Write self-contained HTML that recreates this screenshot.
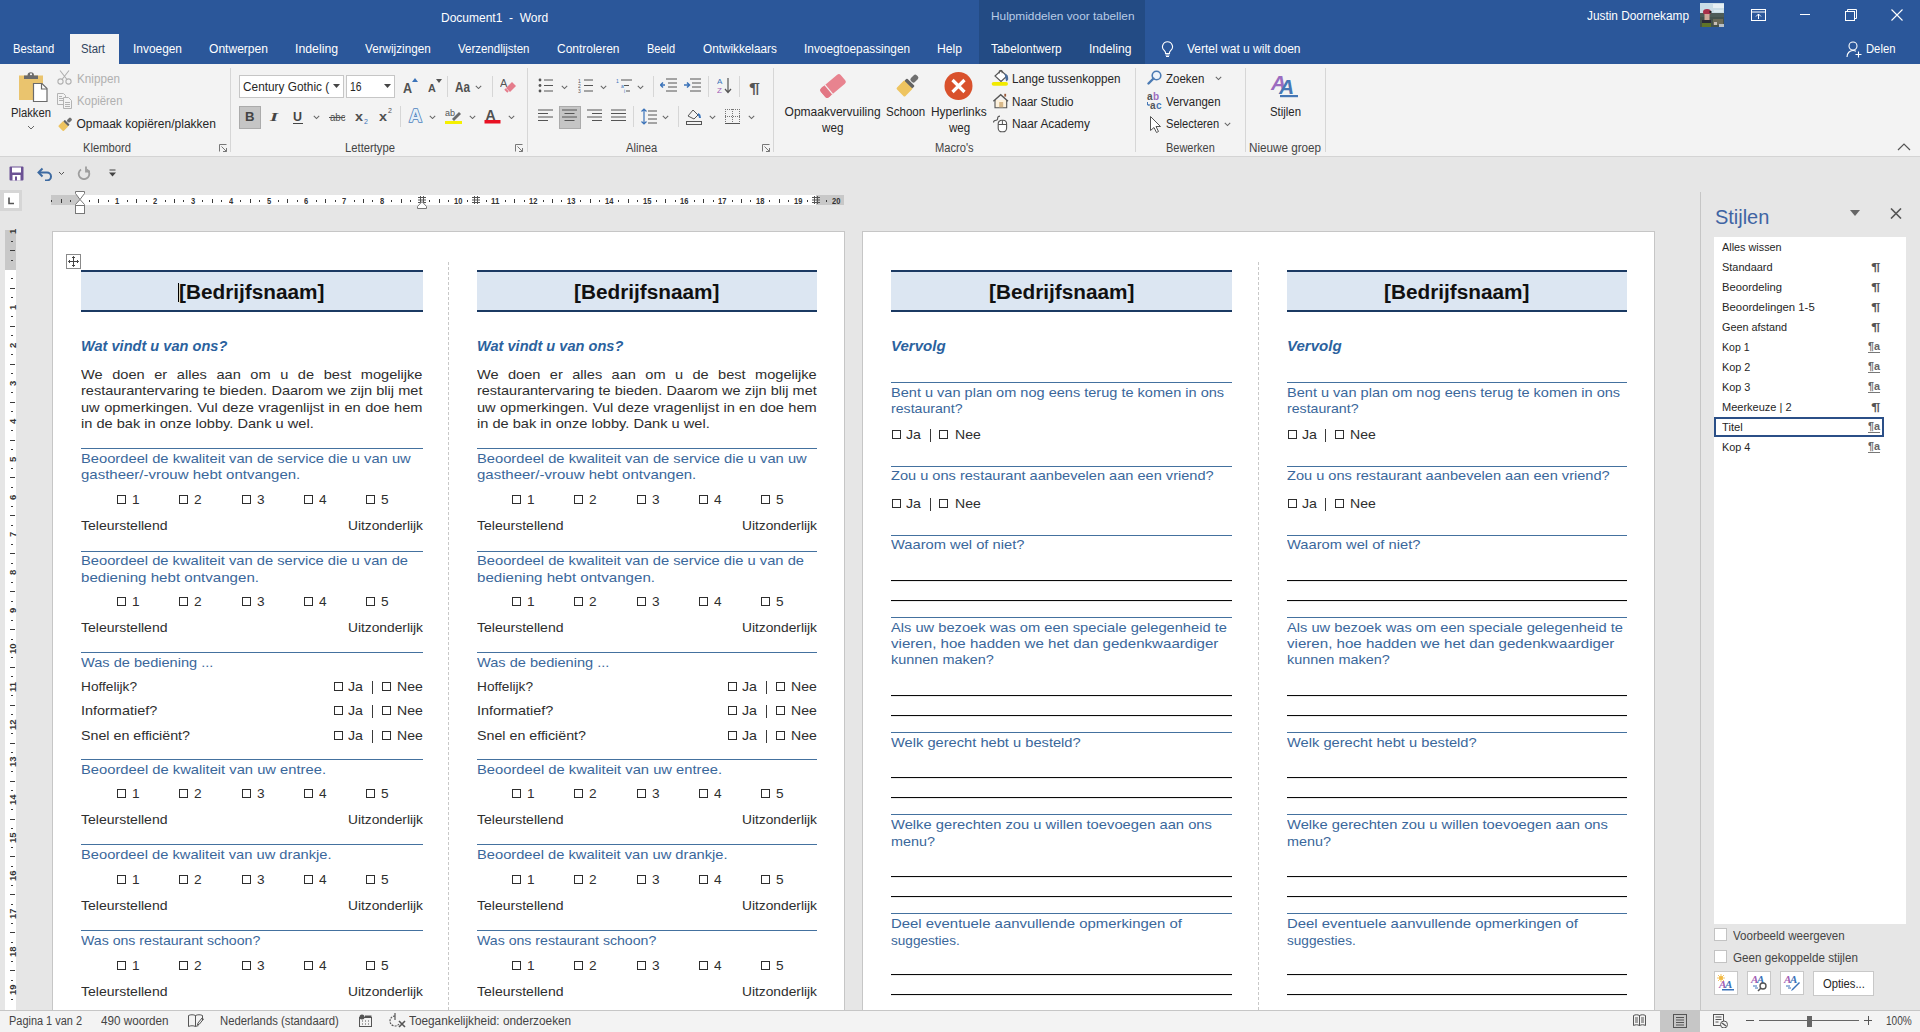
<!DOCTYPE html><html><head><meta charset="utf-8"><title>Document1 - Word</title><style>
html,body{margin:0;padding:0;width:1920px;height:1032px;overflow:hidden;background:#e6e6e6;font-family:'Liberation Sans',sans-serif;}
#root{position:relative;width:1920px;height:1032px;overflow:hidden;}
#root>div{position:absolute;}
.t{position:absolute;white-space:pre;transform-origin:0 0;}
</style></head><body><div id="root">
<div style="left:0px;top:0px;width:1920px;height:64px;background:#2b579a;"></div>
<div style="left:979px;top:0px;width:166px;height:64px;background:#234b84;"></div>
<div class="t" id="t2" style="left:441.00px;top:12.00px;font-size:12px;line-height:12px;color:#ffffff;">Document1  -  Word</div>
<div class="t" id="t3" style="left:991.00px;top:11.00px;font-size:11.5px;line-height:11.5px;color:#b9cbe6;transform:scaleX(1.0296);">Hulpmiddelen voor tabellen</div>
<div class="t" id="t4" style="left:1587.00px;top:10.00px;font-size:12px;line-height:12px;color:#ffffff;transform:scaleX(0.9865);">Justin Doornekamp</div>
<svg style="position:absolute;left:1700px;top:3px;" width="24" height="24" viewBox="0 0 24 24"><rect width="24" height="24" fill="#44524c"/><rect width="24" height="10" fill="#c9dde6"/><rect x="13" y="1" width="11" height="4" fill="#e6f0f4"/><rect x="14" y="7" width="9" height="2" fill="#d8e8ee"/><rect x="0" y="10" width="24" height="4" fill="#4d5c58"/><ellipse cx="7" cy="9" rx="4" ry="3" fill="#a8304a"/><rect x="9.5" y="8" width="2" height="2" fill="#222"/><rect x="4.5" y="11" width="5" height="6" fill="#cfa89a"/><rect x="2" y="17" width="9" height="4" fill="#2a2a38"/><rect x="2" y="20" width="9" height="4" fill="#5f7428"/><rect x="13" y="16" width="10" height="6" fill="#6b6a58"/><rect x="14" y="19" width="3" height="3" fill="#c8c0b8"/><rect x="19" y="21" width="5" height="3" fill="#b8c0c8"/></svg>
<svg style="position:absolute;left:1751px;top:9px;" width="15" height="12" viewBox="0 0 15 12"><rect x="0.5" y="0.5" width="14" height="11" fill="none" stroke="#fff"/><line x1="0.5" y1="3" x2="14.5" y2="3" stroke="#fff"/><path d="M7.5 10V5M5 7.5l2.5-2.5 2.5 2.5" fill="none" stroke="#fff"/></svg>
<div style="left:1800px;top:14px;width:10px;height:1px;background:#ffffff;"></div>
<svg style="position:absolute;left:1845px;top:9px;" width="12" height="12" viewBox="0 0 12 12"><rect x="0.5" y="2.5" width="9" height="9" fill="none" stroke="#fff"/><path d="M2.5 2.5V0.5h9v9h-2" fill="none" stroke="#fff"/></svg>
<svg style="position:absolute;left:1891px;top:9px;" width="12" height="12" viewBox="0 0 12 12"><path d="M0.5 0.5l11 11M11.5 0.5l-11 11" stroke="#fff" stroke-width="1.1"/></svg>
<div style="left:70px;top:34px;width:49px;height:30px;background:#f3f3f3;"></div>
<div class="t" id="t11" style="left:13.40px;top:43.00px;font-size:12.5px;line-height:12.5px;color:#ffffff;transform:scaleX(0.9003);">Bestand</div>
<div class="t" id="t12" style="left:81.00px;top:43.00px;font-size:12.5px;line-height:12.5px;color:#30435e;transform:scaleX(0.9089);">Start</div>
<div class="t" id="t13" style="left:133.00px;top:43.00px;font-size:12.5px;line-height:12.5px;color:#ffffff;transform:scaleX(0.9526);">Invoegen</div>
<div class="t" id="t14" style="left:209.00px;top:43.00px;font-size:12.5px;line-height:12.5px;color:#ffffff;transform:scaleX(0.9647);">Ontwerpen</div>
<div class="t" id="t15" style="left:294.80px;top:43.00px;font-size:12.5px;line-height:12.5px;color:#ffffff;transform:scaleX(0.9841);">Indeling</div>
<div class="t" id="t16" style="left:365.00px;top:43.00px;font-size:12.5px;line-height:12.5px;color:#ffffff;transform:scaleX(0.9361);">Verwijzingen</div>
<div class="t" id="t17" style="left:458.20px;top:43.00px;font-size:12.5px;line-height:12.5px;color:#ffffff;transform:scaleX(0.9187);">Verzendlijsten</div>
<div class="t" id="t18" style="left:557.30px;top:43.00px;font-size:12.5px;line-height:12.5px;color:#ffffff;transform:scaleX(0.9567);">Controleren</div>
<div class="t" id="t19" style="left:647.30px;top:43.00px;font-size:12.5px;line-height:12.5px;color:#ffffff;transform:scaleX(0.8817);">Beeld</div>
<div class="t" id="t20" style="left:703.30px;top:43.00px;font-size:12.5px;line-height:12.5px;color:#ffffff;transform:scaleX(0.9401);">Ontwikkelaars</div>
<div class="t" id="t21" style="left:803.90px;top:43.00px;font-size:12.5px;line-height:12.5px;color:#ffffff;transform:scaleX(0.9481);">Invoegtoepassingen</div>
<div class="t" id="t22" style="left:937.00px;top:43.00px;font-size:12.5px;line-height:12.5px;color:#ffffff;transform:scaleX(0.9721);">Help</div>
<div class="t" id="t23" style="left:991.00px;top:43.00px;font-size:12.5px;line-height:12.5px;color:#ffffff;transform:scaleX(0.9508);">Tabelontwerp</div>
<div class="t" id="t24" style="left:1089.20px;top:43.00px;font-size:12.5px;line-height:12.5px;color:#ffffff;transform:scaleX(0.9681);">Indeling</div>
<svg style="position:absolute;left:1161px;top:41px;" width="13" height="16" viewBox="0 0 13 16"><path d="M6.5 0.8a5 5 0 0 0-3 9c.6.5 1 1.2 1 2v.7h4v-.7c0-.8.4-1.5 1-2a5 5 0 0 0-3-9z" fill="none" stroke="#fff" stroke-width="1.1"/><path d="M4.5 14h4M5 15.5h3" stroke="#fff"/></svg>
<div class="t" id="t26" style="left:1187.00px;top:43.00px;font-size:12.5px;line-height:12.5px;color:#ffffff;transform:scaleX(0.9608);">Vertel wat u wilt doen</div>
<svg style="position:absolute;left:1846px;top:41px;" width="17" height="17" viewBox="0 0 17 17"><circle cx="7" cy="5" r="4" fill="none" stroke="#fff" stroke-width="1.1"/><path d="M1 16c0-4 2.7-6.5 6-6.5 1.2 0 2.2.3 3 .8" fill="none" stroke="#fff" stroke-width="1.1"/><path d="M12.5 10.5v6M9.5 13.5h6" stroke="#fff" stroke-width="1.1"/></svg>
<div class="t" id="t28" style="left:1866.00px;top:43.00px;font-size:12.5px;line-height:12.5px;color:#ffffff;transform:scaleX(0.8999);">Delen</div>
<div style="left:0px;top:64px;width:1920px;height:92px;background:#f3f3f3;"></div>
<div style="left:0px;top:156px;width:1920px;height:1px;background:#d4d4d4;"></div>
<div style="left:230px;top:68px;width:1px;height:84px;background:#d6d6d6;"></div>
<div style="left:527px;top:68px;width:1px;height:84px;background:#d6d6d6;"></div>
<div style="left:773px;top:68px;width:1px;height:84px;background:#d6d6d6;"></div>
<div style="left:1135px;top:68px;width:1px;height:84px;background:#d6d6d6;"></div>
<div style="left:1245px;top:68px;width:1px;height:84px;background:#d6d6d6;"></div>
<div style="left:1325px;top:68px;width:1px;height:84px;background:#d6d6d6;"></div>
<div class="t" id="t37" style="left:82.50px;top:142.00px;font-size:12px;line-height:12px;color:#444444;transform:scaleX(0.9365);">Klembord</div>
<div class="t" id="t38" style="left:345.30px;top:142.00px;font-size:12px;line-height:12px;color:#444444;transform:scaleX(0.9368);">Lettertype</div>
<div class="t" id="t39" style="left:626.20px;top:142.00px;font-size:12px;line-height:12px;color:#444444;transform:scaleX(0.9323);">Alinea</div>
<div class="t" id="t40" style="left:934.50px;top:142.00px;font-size:12px;line-height:12px;color:#444444;transform:scaleX(0.9270);">Macro's</div>
<div class="t" id="t41" style="left:1165.50px;top:142.00px;font-size:12px;line-height:12px;color:#444444;transform:scaleX(0.9143);">Bewerken</div>
<div class="t" id="t42" style="left:1249.30px;top:142.00px;font-size:12px;line-height:12px;color:#444444;transform:scaleX(0.9724);">Nieuwe groep</div>
<svg style="position:absolute;left:219px;top:144px;" width="8" height="8" viewBox="0 0 8 8"><path d="M0.5 7.5V0.5h7" fill="none" stroke="#777"/><path d="M2.5 2.5l5 5M4 7.5h3.5V4" fill="none" stroke="#777"/></svg>
<svg style="position:absolute;left:515px;top:144px;" width="8" height="8" viewBox="0 0 8 8"><path d="M0.5 7.5V0.5h7" fill="none" stroke="#777"/><path d="M2.5 2.5l5 5M4 7.5h3.5V4" fill="none" stroke="#777"/></svg>
<svg style="position:absolute;left:762px;top:144px;" width="8" height="8" viewBox="0 0 8 8"><path d="M0.5 7.5V0.5h7" fill="none" stroke="#777"/><path d="M2.5 2.5l5 5M4 7.5h3.5V4" fill="none" stroke="#777"/></svg>
<svg style="position:absolute;left:1897px;top:142px;" width="14" height="9" viewBox="0 0 14 9"><path d="M1 8l6-6 6 6" fill="none" stroke="#555" stroke-width="1.2"/></svg>
<svg style="position:absolute;left:17px;top:71px;" width="32" height="32" viewBox="0 0 32 32"><rect x="2" y="4.5" width="24" height="24.5" fill="#eac46e"/><path d="M7 8V4.5h3.5a3 3 0 0 1 6.5 0H21V8z" fill="#6b6b6b"/><circle cx="14" cy="3.3" r="1" fill="#fff"/><path d="M16.5 12.5h8.5l5 5v13h-13.5z" fill="#fff" stroke="#6b6b6b" stroke-width="1.2"/><path d="M24.5 12.5v5.5h5.5" fill="none" stroke="#6b6b6b" stroke-width="1.2"/></svg>
<div class="t" id="t48" style="left:10.60px;top:107.00px;font-size:12px;line-height:12px;color:#262626;transform:scaleX(0.9367);">Plakken</div>
<svg style="position:absolute;left:27px;top:125px;" width="8" height="5" viewBox="0 0 8 5"><path d="M1 1l3 3 3-3" fill="none" stroke="#666"/></svg>
<svg style="position:absolute;left:57px;top:70px;" width="16" height="15" viewBox="0 0 16 15"><circle cx="3.5" cy="11.5" r="2.6" fill="none" stroke="#b0b0b0" stroke-width="1.1"/><circle cx="11.5" cy="11.5" r="2.6" fill="none" stroke="#b0b0b0" stroke-width="1.1"/><path d="M5 9.5L12 0.5M10 9.5L3 0.5" stroke="#b0b0b0" stroke-width="1.1"/></svg>
<div class="t" id="t51" style="left:76.50px;top:73.00px;font-size:12px;line-height:12px;color:#b0b0b0;transform:scaleX(0.9740);">Knippen</div>
<svg style="position:absolute;left:57px;top:93px;" width="16" height="16" viewBox="0 0 16 16"><path d="M0.5 0.5h6l2 2v9h-8z" fill="#f3f3f3" stroke="#b3b3b3"/><path d="M2 3.5h3M2 5.5h4M2 7.5h4" stroke="#b3b3b3"/><path d="M6.5 4.5h5l3 3v8h-8z" fill="#f3f3f3" stroke="#b3b3b3"/><path d="M8 9.5h5M8 11.5h5M8 13.5h5" stroke="#b3b3b3"/></svg>
<div class="t" id="t53" style="left:76.50px;top:95.00px;font-size:12px;line-height:12px;color:#b0b0b0;transform:scaleX(0.9470);">Kopiëren</div>
<svg style="position:absolute;left:56px;top:116px;" width="18" height="17" viewBox="0 0 18 17"><g transform="translate(9.5 8) rotate(-45) scale(0.62)"><rect x="-11" y="-6" width="12" height="12" rx="1.5" fill="#eec460"/><rect x="0.5" y="-5.5" width="3.5" height="11" rx="1" fill="#636363"/><rect x="5" y="-2.8" width="8" height="5.6" rx="2" fill="#707070"/></g></svg>
<div class="t" id="t55" style="left:76.50px;top:118.00px;font-size:12px;line-height:12px;color:#262626;">Opmaak kopiëren/plakken</div>
<div style="left:239px;top:75px;width:105px;height:23px;background:#ffffff;box-sizing:border-box;border:1px solid #c6c6c6;"></div>
<div class="t" id="t57" style="left:242.50px;top:81.00px;font-size:12.5px;line-height:12.5px;color:#262626;transform:scaleX(0.9476);">Century Gothic (</div>
<svg style="position:absolute;left:333px;top:84px;" width="7" height="4" viewBox="0 0 7 4"><path d="M0 0h7L3.5 4z" fill="#444"/></svg>
<div style="left:346px;top:75px;width:49px;height:23px;background:#ffffff;box-sizing:border-box;border:1px solid #c6c6c6;"></div>
<div class="t" id="t60" style="left:350.00px;top:81.00px;font-size:12.5px;line-height:12.5px;color:#262626;transform:scaleX(0.8270);">16</div>
<svg style="position:absolute;left:384px;top:84px;" width="7" height="4" viewBox="0 0 7 4"><path d="M0 0h7L3.5 4z" fill="#444"/></svg>
<div class="t" id="t62" style="left:403.40px;top:81.00px;font-size:14px;line-height:14px;color:#505050;font-weight:bold;transform:scaleX(0.8988);">A</div>
<svg style="position:absolute;left:412px;top:78px;" width="6" height="4" viewBox="0 0 6 4"><path d="M0 4l3-4 3 4z" fill="#3b73b9"/></svg>
<div class="t" id="t64" style="left:427.70px;top:83.00px;font-size:11.5px;line-height:11.5px;color:#505050;font-weight:bold;transform:scaleX(0.9383);">A</div>
<svg style="position:absolute;left:436px;top:79px;" width="6" height="4" viewBox="0 0 6 4"><path d="M0 0l3 4 3-4z" fill="#555"/></svg>
<div style="left:447px;top:76px;width:1px;height:21px;background:#d6d6d6;"></div>
<div class="t" id="t67" style="left:455.00px;top:80.00px;font-size:14px;line-height:14px;color:#505050;font-weight:bold;transform:scaleX(0.8377);">Aa</div>
<svg style="position:absolute;left:475px;top:85px;" width="7" height="4" viewBox="0 0 7 4"><path d="M0.8 0.8l2.7 2.7 2.7-2.7" fill="none" stroke="#666" stroke-width="1.05"/></svg>
<div style="left:492px;top:76px;width:1px;height:21px;background:#d6d6d6;"></div>
<svg style="position:absolute;left:500px;top:77px;" width="17" height="16" viewBox="0 0 17 16"><text x="0" y="10" font-family="Liberation Sans" font-size="11" fill="#555">A</text><path d="M6 11l6-6 4 4-6 6z" fill="#e57c8b"/><path d="M5 12l3 3" stroke="#e57c8b" stroke-width="2"/></svg>
<div style="left:239px;top:106px;width:22px;height:23px;background:#c5c5c5;box-sizing:border-box;border:1px solid #ababab;"></div>
<div class="t" id="t72" style="left:245.00px;top:110.00px;font-size:13px;line-height:13px;color:#444444;font-weight:bold;transform:scaleX(1.0116);">B</div>
<div class="t" id="t73" style="left:269.50px;top:110.00px;font-size:13.5px;line-height:13.5px;color:#444444;font-family:'Liberation Serif';font-weight:bold;font-style:italic;transform:scaleX(1.5193);">I</div>
<div class="t" id="t74" style="left:293.00px;top:111.00px;font-size:12.5px;line-height:12.5px;color:#444444;font-weight:bold;transform:scaleX(0.9965);">U</div>
<div style="left:293px;top:123px;width:10px;height:1px;background:#444;"></div>
<svg style="position:absolute;left:313px;top:115px;" width="7" height="5" viewBox="0 0 7 5"><path d="M0.8 0.8l2.7 2.7 2.7-2.7" fill="none" stroke="#666" stroke-width="1.05"/></svg>
<div class="t" id="t77" style="left:329.50px;top:112.00px;font-size:11.5px;line-height:11.5px;color:#505050;transform:scaleX(0.8357);">abc</div>
<div style="left:329px;top:117px;width:16px;height:1px;background:#505050;"></div>
<div class="t" id="t79" style="left:355.00px;top:110.00px;font-size:13px;line-height:13px;color:#505050;font-weight:bold;transform:scaleX(1.1058);">x</div>
<div class="t" id="t80" style="left:364.00px;top:118.00px;font-size:7px;line-height:7px;color:#3b73b9;">2</div>
<div class="t" id="t81" style="left:379.00px;top:110.00px;font-size:13px;line-height:13px;color:#505050;font-weight:bold;transform:scaleX(1.1058);">x</div>
<div class="t" id="t82" style="left:388.00px;top:107.00px;font-size:7px;line-height:7px;color:#505050;">2</div>
<div style="left:400px;top:106px;width:1px;height:21px;background:#d6d6d6;"></div>
<svg style="position:absolute;left:408px;top:106px;" width="16" height="18" viewBox="0 0 16 18"><text x="1" y="16" font-family="Liberation Sans" font-size="18" font-weight="bold" fill="#e4eef8" stroke="#4f83bd" stroke-width="1.6" paint-order="stroke">A</text></svg>
<svg style="position:absolute;left:429px;top:115px;" width="7" height="4" viewBox="0 0 7 4"><path d="M0.8 0.8l2.7 2.7 2.7-2.7" fill="none" stroke="#666" stroke-width="1.05"/></svg>
<svg style="position:absolute;left:445px;top:107px;" width="18" height="18" viewBox="0 0 18 18"><text x="0" y="9" font-family="Liberation Sans" font-size="9" fill="#555">ab</text><path d="M7 12l7-7 2 2-7 7z" fill="#6a6a6a"/><rect x="0" y="14" width="17" height="3" fill="#f5f000"/></svg>
<svg style="position:absolute;left:469px;top:115px;" width="7" height="4" viewBox="0 0 7 4"><path d="M0.8 0.8l2.7 2.7 2.7-2.7" fill="none" stroke="#666" stroke-width="1.05"/></svg>
<svg style="position:absolute;left:484px;top:107px;" width="18" height="18" viewBox="0 0 18 18"><text x="1.5" y="12.5" font-family="Liberation Sans" font-size="14" font-weight="bold" fill="#505050">A</text><rect x="0.5" y="13" width="16" height="3.5" fill="#e81123"/></svg>
<svg style="position:absolute;left:508px;top:115px;" width="7" height="4" viewBox="0 0 7 4"><path d="M0.8 0.8l2.7 2.7 2.7-2.7" fill="none" stroke="#666" stroke-width="1.05"/></svg>
<svg style="position:absolute;left:538px;top:78px;" width="15" height="15" viewBox="0 0 15 15"><circle cx="2" cy="2" r="1.4" fill="#555"/><circle cx="2" cy="7.5" r="1.4" fill="#555"/><circle cx="2" cy="13" r="1.4" fill="#555"/><path d="M6 2h9M6 7.5h9M6 13h9" stroke="#555"/></svg>
<svg style="position:absolute;left:561px;top:85px;" width="7" height="5" viewBox="0 0 7 5"><path d="M0.8 0.8l2.7 2.7 2.7-2.7" fill="none" stroke="#666" stroke-width="1.05"/></svg>
<svg style="position:absolute;left:578px;top:78px;" width="15" height="15" viewBox="0 0 15 15"><text x="0" y="5" font-size="5" font-family="Liberation Sans" fill="#555">1</text><text x="0" y="10" font-size="5" font-family="Liberation Sans" fill="#555">2</text><text x="0" y="15" font-size="5" font-family="Liberation Sans" fill="#555">3</text><path d="M6 2h9M6 7.5h9M6 13h9" stroke="#555"/></svg>
<svg style="position:absolute;left:600px;top:85px;" width="7" height="5" viewBox="0 0 7 5"><path d="M0.8 0.8l2.7 2.7 2.7-2.7" fill="none" stroke="#666" stroke-width="1.05"/></svg>
<svg style="position:absolute;left:616px;top:78px;" width="17" height="15" viewBox="0 0 17 15"><text x="0" y="5" font-size="5" font-family="Liberation Sans" fill="#3b73b9">1</text><path d="M5 2h11M8 7.5h5M10 13h4" stroke="#555"/><text x="5" y="10" font-size="5" font-family="Liberation Sans" fill="#3b73b9">a</text><text x="8" y="15" font-size="5" font-family="Liberation Sans" fill="#3b73b9">i</text></svg>
<svg style="position:absolute;left:637px;top:85px;" width="7" height="5" viewBox="0 0 7 5"><path d="M0.8 0.8l2.7 2.7 2.7-2.7" fill="none" stroke="#666" stroke-width="1.05"/></svg>
<div style="left:653px;top:76px;width:1px;height:21px;background:#d6d6d6;"></div>
<svg style="position:absolute;left:660px;top:78px;" width="17" height="14" viewBox="0 0 17 14"><path d="M6 1h11M8 5h9M8 9h9M6 13h11" stroke="#555"/><path d="M5 7H0.5M3 4.5L0.5 7 3 9.5" fill="none" stroke="#3b73b9" stroke-width="1.5"/></svg>
<svg style="position:absolute;left:684px;top:78px;" width="17" height="14" viewBox="0 0 17 14"><path d="M6 1h11M8 5h9M8 9h9M6 13h11" stroke="#555"/><path d="M0 7h5M3 4.5L5.5 7 3 9.5" fill="none" stroke="#3b73b9" stroke-width="1.5"/></svg>
<div style="left:708px;top:76px;width:1px;height:21px;background:#d6d6d6;"></div>
<svg style="position:absolute;left:717px;top:77px;" width="15" height="17" viewBox="0 0 15 17"><text x="0" y="7" font-size="8" font-family="Liberation Sans" fill="#3b73b9">A</text><text x="0" y="16" font-size="8" font-family="Liberation Sans" fill="#a35fb5">Z</text><path d="M11 1v14M8 12l3 3.5 3-3.5" fill="none" stroke="#555" stroke-width="1.2"/></svg>
<div style="left:739px;top:76px;width:1px;height:21px;background:#d6d6d6;"></div>
<div class="t" id="t102" style="left:749.00px;top:80.00px;font-size:15px;line-height:15px;color:#555555;font-weight:bold;transform:scaleX(1.3184);">¶</div>
<svg style="position:absolute;left:538px;top:109px;" width="16" height="16" viewBox="0 0 16 16"><path d="M0 1.0h15" stroke="#555"/><path d="M0 4.5h10" stroke="#555"/><path d="M0 8.0h15" stroke="#555"/><path d="M0 11.5h10" stroke="#555"/></svg>
<div style="left:559px;top:106px;width:22px;height:23px;background:#c5c5c5;box-sizing:border-box;border:1px solid #ababab;"></div>
<svg style="position:absolute;left:562px;top:109px;" width="16" height="16" viewBox="0 0 16 16"><path d="M0 1.0h15" stroke="#555"/><path d="M2.5 4.5h10" stroke="#555"/><path d="M0 8.0h15" stroke="#555"/><path d="M2.5 11.5h10" stroke="#555"/></svg>
<svg style="position:absolute;left:587px;top:109px;" width="16" height="16" viewBox="0 0 16 16"><path d="M0 1.0h15" stroke="#555"/><path d="M5 4.5h10" stroke="#555"/><path d="M0 8.0h15" stroke="#555"/><path d="M5 11.5h10" stroke="#555"/></svg>
<svg style="position:absolute;left:611px;top:109px;" width="16" height="16" viewBox="0 0 16 16"><path d="M0 1.0h15" stroke="#555"/><path d="M0 4.5h15" stroke="#555"/><path d="M0 8.0h15" stroke="#555"/><path d="M0 11.5h15" stroke="#555"/></svg>
<div style="left:633px;top:106px;width:1px;height:21px;background:#d6d6d6;"></div>
<svg style="position:absolute;left:641px;top:108px;" width="17" height="17" viewBox="0 0 17 17"><path d="M3 1v15M0.5 3.5L3 1l2.5 2.5M0.5 13.5L3 16l2.5-2.5" fill="none" stroke="#3b73b9" stroke-width="1.2"/><path d="M7 3h9M7 7h9M7 11h9M7 15h9" stroke="#555"/></svg>
<svg style="position:absolute;left:662px;top:115px;" width="7" height="5" viewBox="0 0 7 5"><path d="M0.8 0.8l2.7 2.7 2.7-2.7" fill="none" stroke="#666" stroke-width="1.05"/></svg>
<div style="left:678px;top:106px;width:1px;height:21px;background:#d6d6d6;"></div>
<svg style="position:absolute;left:686px;top:108px;" width="17" height="17" viewBox="0 0 17 17"><path d="M2 8l5-6 5 5-4 4z" fill="none" stroke="#555"/><path d="M12 6c2 1 2 3 2 4" stroke="#3b73b9" stroke-width="2" fill="none"/><rect x="0.5" y="13.5" width="15" height="3" fill="none" stroke="#555"/></svg>
<svg style="position:absolute;left:709px;top:115px;" width="7" height="5" viewBox="0 0 7 5"><path d="M0.8 0.8l2.7 2.7 2.7-2.7" fill="none" stroke="#666" stroke-width="1.05"/></svg>
<svg style="position:absolute;left:725px;top:109px;" width="15" height="15" viewBox="0 0 15 15"><path d="M0 0.5h15M0 7.5h15M0.5 0v14M7.5 0v14M14.5 0v14" stroke="#777" stroke-dasharray="1 1"/><path d="M0 14.5h15" stroke="#555"/></svg>
<svg style="position:absolute;left:748px;top:115px;" width="7" height="5" viewBox="0 0 7 5"><path d="M0.8 0.8l2.7 2.7 2.7-2.7" fill="none" stroke="#666" stroke-width="1.05"/></svg>
<svg style="position:absolute;left:818px;top:71px;" width="30" height="30" viewBox="0 0 30 30"><g transform="rotate(-40 15 15)"><rect x="2" y="9" width="26" height="12" rx="2.5" fill="#e8838f"/><rect x="2" y="9" width="7" height="12" rx="2.5" fill="#e27784"/><line x1="9.5" y1="9" x2="9.5" y2="21" stroke="#f3f3f3" stroke-width="1.2"/></g></svg>
<div class="t" id="t117" style="left:784.60px;top:106.00px;font-size:12px;line-height:12px;color:#262626;">Opmaakvervuiling</div>
<div class="t" id="t118" style="left:822.00px;top:122.00px;font-size:12px;line-height:12px;color:#262626;transform:scaleX(0.9720);">weg</div>
<svg style="position:absolute;left:892px;top:72px;" width="30" height="28" viewBox="0 0 30 28"><g transform="translate(16 13) rotate(-45)"><rect x="-11" y="-6" width="12" height="12" rx="1.5" fill="#eec460"/><rect x="0.5" y="-5.5" width="3.5" height="11" rx="1" fill="#636363"/><rect x="5" y="-2.8" width="8" height="5.6" rx="2" fill="#707070"/></g></svg>
<div class="t" id="t120" style="left:886.20px;top:106.00px;font-size:12px;line-height:12px;color:#262626;transform:scaleX(0.9631);">Schoon</div>
<svg style="position:absolute;left:944px;top:72px;" width="30" height="30" viewBox="0 0 30 30"><circle cx="14.5" cy="14" r="14" fill="#d9512c"/><path d="M8.5 8l12 12M20.5 8l-12 12" stroke="#fff" stroke-width="3.2"/></svg>
<div class="t" id="t122" style="left:931.10px;top:106.00px;font-size:12px;line-height:12px;color:#262626;transform:scaleX(0.9926);">Hyperlinks</div>
<div class="t" id="t123" style="left:948.50px;top:122.00px;font-size:12px;line-height:12px;color:#262626;transform:scaleX(0.9630);">weg</div>
<svg style="position:absolute;left:990px;top:68px;" width="20" height="20" viewBox="0 0 20 20"><path d="M5 8L11 2.5 17 8 11 13.5z" fill="#fff" stroke="#555" stroke-width="1.1"/><path d="M9.3 5.5V2.7h2.8v2.5" fill="none" stroke="#555"/><path d="M14.5 5.5c2.5.5 4 2.5 3.6 6.5l-2 1.5z" fill="#4a6d9c"/><rect x="1.7" y="13.9" width="16.3" height="3.8" rx="1.9" fill="#f2ea00"/></svg>
<div class="t" id="t125" style="left:1012.30px;top:73.00px;font-size:12px;line-height:12px;color:#262626;transform:scaleX(0.9736);">Lange tussenkoppen</div>
<svg style="position:absolute;left:992px;top:92px;" width="17" height="17" viewBox="0 0 17 17"><path d="M3 8v7.8h11.7V8" fill="#fdf1dc" stroke="#555" stroke-width="1.1"/><path d="M1.4 9.3L8.7 2.8 16 9.3" fill="none" stroke="#555" stroke-width="1.4"/><rect x="7.2" y="10" width="4" height="5.3" fill="#d8b888"/><rect x="12.3" y="1.8" width="1.8" height="2.8" fill="#9a5a3a"/></svg>
<div class="t" id="t127" style="left:1012.30px;top:96.00px;font-size:12px;line-height:12px;color:#262626;transform:scaleX(0.9704);">Naar Studio</div>
<svg style="position:absolute;left:992px;top:115px;" width="17" height="18" viewBox="0 0 17 18"><path d="M1.5 7.5c0-2 1.5-2.2 2.7-2.2 1.2 0 1.5-1 1.5-2.2 0-1.5 1.2-2 2.3-2" fill="none" stroke="#555" stroke-width="1.1"/><rect x="6.2" y="5.2" width="8.4" height="11.6" rx="3.6" fill="#fff" stroke="#555" stroke-width="1.1"/><path d="M6.2 9.5h8.4M10.4 5.2v4.3" stroke="#555" stroke-width="1"/></svg>
<div class="t" id="t129" style="left:1012.30px;top:118.00px;font-size:12px;line-height:12px;color:#262626;transform:scaleX(0.9898);">Naar Academy</div>
<svg style="position:absolute;left:1147px;top:70px;" width="15" height="15" viewBox="0 0 15 15"><circle cx="9.5" cy="5.5" r="4.3" fill="#eef4fb" stroke="#4a7ab3" stroke-width="1.6"/><path d="M6.5 8.5L1.5 13.5" stroke="#4a7ab3" stroke-width="2.4" stroke-linecap="round"/></svg>
<div class="t" id="t131" style="left:1166.00px;top:73.00px;font-size:12px;line-height:12px;color:#262626;transform:scaleX(0.9568);">Zoeken</div>
<svg style="position:absolute;left:1215px;top:76px;" width="7" height="5" viewBox="0 0 7 5"><path d="M0.8 0.8l2.7 2.7 2.7-2.7" fill="none" stroke="#666" stroke-width="1.05"/></svg>
<svg style="position:absolute;left:1146px;top:92px;" width="20" height="18" viewBox="0 0 20 18"><text x="1" y="8" font-size="10" font-weight="bold" font-family="Liberation Sans" fill="#555">a</text><text x="7" y="8" font-size="10" font-weight="bold" font-family="Liberation Sans" fill="#9b6cc0">b</text><text x="4" y="17" font-size="10" font-weight="bold" font-family="Liberation Sans" fill="#555">a</text><text x="10" y="17" font-size="10" font-weight="bold" font-family="Liberation Sans" fill="#4577b5">c</text><path d="M1.5 10v3h2M2.5 12l1 1-1 1" fill="none" stroke="#4577b5" stroke-width="1"/></svg>
<div class="t" id="t134" style="left:1166.00px;top:96.00px;font-size:12px;line-height:12px;color:#262626;transform:scaleX(0.9496);">Vervangen</div>
<svg style="position:absolute;left:1150px;top:116px;" width="11" height="17" viewBox="0 0 11 17"><path d="M0.5 0.5v14l3.5-3 2.5 5 2-1-2.5-5h4.5z" fill="#fff" stroke="#555"/></svg>
<div class="t" id="t136" style="left:1166.00px;top:118.00px;font-size:12px;line-height:12px;color:#262626;transform:scaleX(0.9272);">Selecteren</div>
<svg style="position:absolute;left:1224px;top:122px;" width="7" height="5" viewBox="0 0 7 5"><path d="M0.8 0.8l2.7 2.7 2.7-2.7" fill="none" stroke="#666" stroke-width="1.05"/></svg>
<svg style="position:absolute;left:1270px;top:72px;" width="30" height="27" viewBox="0 0 30 27"><text x="1" y="18" font-family="Liberation Sans" font-style="italic" font-weight="bold" font-size="21" fill="#9b6cc0">A</text><text x="9" y="22" font-family="Liberation Sans" font-style="italic" font-weight="bold" font-size="21" fill="#4577b5">A</text><rect x="10" y="23" width="18" height="2.2" fill="#4577b5"/></svg>
<div class="t" id="t139" style="left:1270.30px;top:106.00px;font-size:12px;line-height:12px;color:#262626;transform:scaleX(0.9484);">Stijlen</div>
<svg style="position:absolute;left:9px;top:166px;" width="15" height="15" viewBox="0 0 15 15"><rect x="0.5" y="0.5" width="14" height="14" rx="1" fill="#6b5194"/><rect x="3" y="1.5" width="9" height="5" fill="#fff"/><rect x="3.5" y="9" width="8" height="5.5" fill="#fff"/><rect x="6" y="10.5" width="2" height="4" fill="#6b5194"/></svg>
<svg style="position:absolute;left:37px;top:166px;" width="16" height="15" viewBox="0 0 16 15"><path d="M2 6.5h8a4 4 0 0 1 0 8H8" fill="none" stroke="#3d6aa1" stroke-width="2"/><path d="M5.5 2.5L1.5 6.5l4 4" fill="none" stroke="#3d6aa1" stroke-width="2"/></svg>
<svg style="position:absolute;left:58px;top:171px;" width="7" height="5" viewBox="0 0 7 5"><path d="M1 1l2.5 2.5 2.5-2.5" fill="none" stroke="#555"/></svg>
<svg style="position:absolute;left:77px;top:166px;" width="14" height="14" viewBox="0 0 14 14"><path d="M4 3.5a5.3 5.3 0 1 0 6 0" fill="none" stroke="#9e9e9e" stroke-width="1.8"/><path d="M9 0.5v5h4" fill="none" stroke="#9e9e9e" stroke-width="1.8"/></svg>
<svg style="position:absolute;left:109px;top:169px;" width="7" height="8" viewBox="0 0 7 8"><path d="M0.5 1h6" stroke="#444"/><path d="M0 3.5h7L3.5 7.5z" fill="#444"/></svg>
<div style="left:0px;top:190px;width:22px;height:21px;background:#d6d6d6;"></div>
<div style="left:4px;top:193px;width:15px;height:15px;background:#ffffff;"></div>
<svg style="position:absolute;left:8px;top:197px;" width="7" height="8" viewBox="0 0 7 8"><path d="M1 0.5v6h5" fill="none" stroke="#555" stroke-width="1.6"/></svg>
<div style="left:51px;top:195px;width:793px;height:10px;background:#ffffff;"></div>
<div style="left:51px;top:195px;width:29px;height:10px;background:#c8c8c8;"></div>
<div style="left:816px;top:195px;width:28px;height:10px;background:#c8c8c8;"></div>
<div style="left:51px;top:200px;width:1px;height:2px;background:#3c3c3c;"></div>
<div style="left:61px;top:199px;width:1px;height:4px;background:#3c3c3c;"></div>
<div style="left:70px;top:200px;width:1px;height:2px;background:#3c3c3c;"></div>
<div style="left:89px;top:200px;width:1px;height:2px;background:#3c3c3c;"></div>
<div style="left:98px;top:199px;width:1px;height:4px;background:#3c3c3c;"></div>
<div style="left:108px;top:200px;width:1px;height:2px;background:#3c3c3c;"></div>
<div class="t" id="t157" style="left:115.40px;top:196.00px;font-size:9.5px;line-height:9.5px;color:#333333;font-weight:bold;transform:scaleX(0.7929);">1</div>
<div style="left:127px;top:200px;width:1px;height:2px;background:#3c3c3c;"></div>
<div style="left:136px;top:199px;width:1px;height:4px;background:#3c3c3c;"></div>
<div style="left:146px;top:200px;width:1px;height:2px;background:#3c3c3c;"></div>
<div class="t" id="t161" style="left:153.20px;top:196.00px;font-size:9.5px;line-height:9.5px;color:#333333;font-weight:bold;transform:scaleX(0.7929);">2</div>
<div style="left:165px;top:200px;width:1px;height:2px;background:#3c3c3c;"></div>
<div style="left:174px;top:199px;width:1px;height:4px;background:#3c3c3c;"></div>
<div style="left:183px;top:200px;width:1px;height:2px;background:#3c3c3c;"></div>
<div class="t" id="t165" style="left:191.00px;top:196.00px;font-size:9.5px;line-height:9.5px;color:#333333;font-weight:bold;transform:scaleX(0.7929);">3</div>
<div style="left:202px;top:200px;width:1px;height:2px;background:#3c3c3c;"></div>
<div style="left:212px;top:199px;width:1px;height:4px;background:#3c3c3c;"></div>
<div style="left:221px;top:200px;width:1px;height:2px;background:#3c3c3c;"></div>
<div class="t" id="t169" style="left:228.80px;top:196.00px;font-size:9.5px;line-height:9.5px;color:#333333;font-weight:bold;transform:scaleX(0.7929);">4</div>
<div style="left:240px;top:200px;width:1px;height:2px;background:#3c3c3c;"></div>
<div style="left:250px;top:199px;width:1px;height:4px;background:#3c3c3c;"></div>
<div style="left:259px;top:200px;width:1px;height:2px;background:#3c3c3c;"></div>
<div class="t" id="t173" style="left:266.60px;top:196.00px;font-size:9.5px;line-height:9.5px;color:#333333;font-weight:bold;transform:scaleX(0.7929);">5</div>
<div style="left:278px;top:200px;width:1px;height:2px;background:#3c3c3c;"></div>
<div style="left:287px;top:199px;width:1px;height:4px;background:#3c3c3c;"></div>
<div style="left:297px;top:200px;width:1px;height:2px;background:#3c3c3c;"></div>
<div class="t" id="t177" style="left:304.40px;top:196.00px;font-size:9.5px;line-height:9.5px;color:#333333;font-weight:bold;transform:scaleX(0.7929);">6</div>
<div style="left:316px;top:200px;width:1px;height:2px;background:#3c3c3c;"></div>
<div style="left:325px;top:199px;width:1px;height:4px;background:#3c3c3c;"></div>
<div style="left:335px;top:200px;width:1px;height:2px;background:#3c3c3c;"></div>
<div class="t" id="t181" style="left:342.20px;top:196.00px;font-size:9.5px;line-height:9.5px;color:#333333;font-weight:bold;transform:scaleX(0.7929);">7</div>
<div style="left:354px;top:200px;width:1px;height:2px;background:#3c3c3c;"></div>
<div style="left:363px;top:199px;width:1px;height:4px;background:#3c3c3c;"></div>
<div style="left:372px;top:200px;width:1px;height:2px;background:#3c3c3c;"></div>
<div class="t" id="t185" style="left:380.00px;top:196.00px;font-size:9.5px;line-height:9.5px;color:#333333;font-weight:bold;transform:scaleX(0.7929);">8</div>
<div style="left:391px;top:200px;width:1px;height:2px;background:#3c3c3c;"></div>
<div style="left:401px;top:199px;width:1px;height:4px;background:#3c3c3c;"></div>
<div style="left:410px;top:200px;width:1px;height:2px;background:#3c3c3c;"></div>
<div style="left:429px;top:200px;width:1px;height:2px;background:#3c3c3c;"></div>
<div style="left:439px;top:199px;width:1px;height:4px;background:#3c3c3c;"></div>
<div style="left:448px;top:200px;width:1px;height:2px;background:#3c3c3c;"></div>
<div class="t" id="t192" style="left:453.50px;top:196.00px;font-size:9.5px;line-height:9.5px;color:#333333;font-weight:bold;transform:scaleX(0.7941);">10</div>
<div style="left:467px;top:200px;width:1px;height:2px;background:#3c3c3c;"></div>
<div style="left:486px;top:200px;width:1px;height:2px;background:#3c3c3c;"></div>
<div class="t" id="t195" style="left:491.30px;top:196.00px;font-size:9.5px;line-height:9.5px;color:#333333;font-weight:bold;transform:scaleX(0.8361);">11</div>
<div style="left:505px;top:200px;width:1px;height:2px;background:#3c3c3c;"></div>
<div style="left:514px;top:199px;width:1px;height:4px;background:#3c3c3c;"></div>
<div style="left:524px;top:200px;width:1px;height:2px;background:#3c3c3c;"></div>
<div class="t" id="t199" style="left:529.10px;top:196.00px;font-size:9.5px;line-height:9.5px;color:#333333;font-weight:bold;transform:scaleX(0.7941);">12</div>
<div style="left:543px;top:200px;width:1px;height:2px;background:#3c3c3c;"></div>
<div style="left:552px;top:199px;width:1px;height:4px;background:#3c3c3c;"></div>
<div style="left:561px;top:200px;width:1px;height:2px;background:#3c3c3c;"></div>
<div class="t" id="t203" style="left:566.90px;top:196.00px;font-size:9.5px;line-height:9.5px;color:#333333;font-weight:bold;transform:scaleX(0.7941);">13</div>
<div style="left:580px;top:200px;width:1px;height:2px;background:#3c3c3c;"></div>
<div style="left:590px;top:199px;width:1px;height:4px;background:#3c3c3c;"></div>
<div style="left:599px;top:200px;width:1px;height:2px;background:#3c3c3c;"></div>
<div class="t" id="t207" style="left:604.70px;top:196.00px;font-size:9.5px;line-height:9.5px;color:#333333;font-weight:bold;transform:scaleX(0.7941);">14</div>
<div style="left:618px;top:200px;width:1px;height:2px;background:#3c3c3c;"></div>
<div style="left:628px;top:199px;width:1px;height:4px;background:#3c3c3c;"></div>
<div style="left:637px;top:200px;width:1px;height:2px;background:#3c3c3c;"></div>
<div class="t" id="t211" style="left:642.50px;top:196.00px;font-size:9.5px;line-height:9.5px;color:#333333;font-weight:bold;transform:scaleX(0.7941);">15</div>
<div style="left:656px;top:200px;width:1px;height:2px;background:#3c3c3c;"></div>
<div style="left:665px;top:199px;width:1px;height:4px;background:#3c3c3c;"></div>
<div style="left:675px;top:200px;width:1px;height:2px;background:#3c3c3c;"></div>
<div class="t" id="t215" style="left:680.30px;top:196.00px;font-size:9.5px;line-height:9.5px;color:#333333;font-weight:bold;transform:scaleX(0.7941);">16</div>
<div style="left:694px;top:200px;width:1px;height:2px;background:#3c3c3c;"></div>
<div style="left:703px;top:199px;width:1px;height:4px;background:#3c3c3c;"></div>
<div style="left:713px;top:200px;width:1px;height:2px;background:#3c3c3c;"></div>
<div class="t" id="t219" style="left:718.10px;top:196.00px;font-size:9.5px;line-height:9.5px;color:#333333;font-weight:bold;transform:scaleX(0.7941);">17</div>
<div style="left:732px;top:200px;width:1px;height:2px;background:#3c3c3c;"></div>
<div style="left:741px;top:199px;width:1px;height:4px;background:#3c3c3c;"></div>
<div style="left:750px;top:200px;width:1px;height:2px;background:#3c3c3c;"></div>
<div class="t" id="t223" style="left:755.90px;top:196.00px;font-size:9.5px;line-height:9.5px;color:#333333;font-weight:bold;transform:scaleX(0.7941);">18</div>
<div style="left:769px;top:200px;width:1px;height:2px;background:#3c3c3c;"></div>
<div style="left:779px;top:199px;width:1px;height:4px;background:#3c3c3c;"></div>
<div style="left:788px;top:200px;width:1px;height:2px;background:#3c3c3c;"></div>
<div class="t" id="t227" style="left:793.70px;top:196.00px;font-size:9.5px;line-height:9.5px;color:#333333;font-weight:bold;transform:scaleX(0.7941);">19</div>
<div style="left:807px;top:200px;width:1px;height:2px;background:#3c3c3c;"></div>
<div style="left:826px;top:200px;width:1px;height:2px;background:#3c3c3c;"></div>
<div class="t" id="t230" style="left:831.50px;top:196.00px;font-size:9.5px;line-height:9.5px;color:#333333;font-weight:bold;transform:scaleX(0.7941);">20</div>
<svg style="position:absolute;left:75px;top:191px;" width="11" height="24" viewBox="0 0 11 24"><path d="M0.5 0.5h9v2l-4.5 6-4.5-6z" fill="#fff" stroke="#777"/><path d="M5 8.5l4.5 5v1h-9v-1z" fill="#fff" stroke="#777"/><rect x="0.5" y="14.5" width="9" height="8" fill="#fff" stroke="#777"/></svg>
<svg style="position:absolute;left:418px;top:196px;" width="8" height="8" viewBox="0 0 8 8"><path d="M0 1.5h8M0 4h8M0 6.5h8M2.5 0v8M5.5 0v8" stroke="#555" stroke-width="1"/></svg>
<svg style="position:absolute;left:472px;top:196px;" width="8" height="8" viewBox="0 0 8 8"><path d="M0 1.5h8M0 4h8M0 6.5h8M2.5 0v8M5.5 0v8" stroke="#555" stroke-width="1"/></svg>
<svg style="position:absolute;left:812px;top:196px;" width="8" height="8" viewBox="0 0 8 8"><path d="M0 1.5h8M0 4h8M0 6.5h8M2.5 0v8M5.5 0v8" stroke="#555" stroke-width="1"/></svg>
<svg style="position:absolute;left:417px;top:201px;" width="10" height="8" viewBox="0 0 10 8"><path d="M0.5 7.5v-2l4.5-5 4.5 5v2z" fill="#fff" stroke="#777"/></svg>
<div style="left:0px;top:211px;width:22px;height:800px;background:#e6e6e6;"></div>
<div style="left:5px;top:230px;width:11px;height:780px;background:#ffffff;"></div>
<div style="left:5px;top:230px;width:11px;height:40px;background:#c8c8c8;"></div>
<div style="left:52px;top:231px;width:793px;height:800px;background:#ffffff;box-sizing:border-box;border:1px solid #c6c6c6;border-bottom:none;"></div>
<div style="left:862px;top:231px;width:793px;height:800px;background:#ffffff;box-sizing:border-box;border:1px solid #c6c6c6;border-bottom:none;"></div>
<div style="left:448px;top:262px;width:0;height:748px;border-left:1px dashed #c8c8c8;"></div>
<div style="left:1258px;top:262px;width:0;height:748px;border-left:1px dashed #c8c8c8;"></div>
<svg style="position:absolute;left:66px;top:254px;" width="16" height="16" viewBox="0 0 16 16"><rect x="0.5" y="0.5" width="14" height="14" fill="#fff" stroke="#8a8a8a"/><path d="M7.5 2.5v10M2.5 7.5h10" stroke="#444"/><path d="M6 4l1.5-1.5L9 4M6 11l1.5 1.5L9 11M4 6L2.5 7.5 4 9M11 6l1.5 1.5L11 9" fill="none" stroke="#444"/></svg>
<div style="left:81px;top:270px;width:342px;height:2px;background:#1b3a63;"></div>
<div style="left:81px;top:272px;width:342px;height:38px;background:#dce6f2;"></div>
<div style="left:81px;top:310px;width:342px;height:2px;background:#1b3a63;"></div>
<div class="t" id="t247" style="left:179.35px;top:283.00px;font-size:19.5px;line-height:19.5px;color:#111111;font-weight:bold;transform:scaleX(1.0650);">[Bedrijfsnaam]</div>
<div style="left:477px;top:270px;width:340px;height:2px;background:#1b3a63;"></div>
<div style="left:477px;top:272px;width:340px;height:38px;background:#dce6f2;"></div>
<div style="left:477px;top:310px;width:340px;height:2px;background:#1b3a63;"></div>
<div class="t" id="t251" style="left:574.35px;top:283.00px;font-size:19.5px;line-height:19.5px;color:#111111;font-weight:bold;transform:scaleX(1.0650);">[Bedrijfsnaam]</div>
<div style="left:891px;top:270px;width:341px;height:2px;background:#1b3a63;"></div>
<div style="left:891px;top:272px;width:341px;height:38px;background:#dce6f2;"></div>
<div style="left:891px;top:310px;width:341px;height:2px;background:#1b3a63;"></div>
<div class="t" id="t255" style="left:988.90px;top:283.00px;font-size:19.5px;line-height:19.5px;color:#111111;font-weight:bold;transform:scaleX(1.0650);">[Bedrijfsnaam]</div>
<div style="left:1287px;top:270px;width:340px;height:2px;background:#1b3a63;"></div>
<div style="left:1287px;top:272px;width:340px;height:38px;background:#dce6f2;"></div>
<div style="left:1287px;top:310px;width:340px;height:2px;background:#1b3a63;"></div>
<div class="t" id="t259" style="left:1384.35px;top:283.00px;font-size:19.5px;line-height:19.5px;color:#111111;font-weight:bold;transform:scaleX(1.0650);">[Bedrijfsnaam]</div>
<div class="t" id="t260" style="left:81.30px;top:339.00px;font-size:14.5px;line-height:14.5px;color:#2b629e;font-weight:bold;font-style:italic;transform:scaleX(1.0052);">Wat vindt u van ons?</div>
<div class="t" id="t261" style="left:81.30px;top:368.00px;font-size:13px;line-height:13px;color:#2e2e2e;width:304.10px;text-align:justify;text-align-last:justify;white-space:normal;transform:scaleX(1.1230);">We doen er alles aan om u de best mogelijke</div>
<div class="t" id="t262" style="left:81.30px;top:384.00px;font-size:13px;line-height:13px;color:#2e2e2e;width:305.73px;text-align:justify;text-align-last:justify;white-space:normal;transform:scaleX(1.1170);">restaurantervaring te bieden. Daarom we zijn blij met</div>
<div class="t" id="t263" style="left:81.30px;top:401.00px;font-size:13px;line-height:13px;color:#2e2e2e;width:304.10px;text-align:justify;text-align-last:justify;white-space:normal;transform:scaleX(1.1230);">uw opmerkingen. Vul deze vragenlijst in en doe hem</div>
<div class="t" id="t264" style="left:81.30px;top:417.00px;font-size:13px;line-height:13px;color:#2e2e2e;transform:scaleX(1.1232);">in de bak in onze lobby. Dank u wel.</div>
<div style="left:81px;top:448px;width:342px;height:1px;background:#44719f;"></div>
<div class="t" id="t266" style="left:81.30px;top:452.00px;font-size:13px;line-height:13px;color:#3a679b;transform:scaleX(1.1321);">Beoordeel de kwaliteit van de service die u van uw</div>
<div class="t" id="t267" style="left:81.30px;top:468.00px;font-size:13px;line-height:13px;color:#3a679b;transform:scaleX(1.1537);">gastheer/-vrouw hebt ontvangen.</div>
<div style="left:117px;top:495px;width:9px;height:9px;background:transparent;box-sizing:border-box;border:1px solid #2e2e2e;"></div>
<div class="t" id="t269" style="left:132.40px;top:493.00px;font-size:13px;line-height:13px;color:#2e2e2e;transform:scaleX(1.0500);">1</div>
<div style="left:179px;top:495px;width:9px;height:9px;background:transparent;box-sizing:border-box;border:1px solid #2e2e2e;"></div>
<div class="t" id="t271" style="left:194.20px;top:493.00px;font-size:13px;line-height:13px;color:#2e2e2e;transform:scaleX(1.0500);">2</div>
<div style="left:242px;top:495px;width:9px;height:9px;background:transparent;box-sizing:border-box;border:1px solid #2e2e2e;"></div>
<div class="t" id="t273" style="left:257.10px;top:493.00px;font-size:13px;line-height:13px;color:#2e2e2e;transform:scaleX(1.0500);">3</div>
<div style="left:304px;top:495px;width:9px;height:9px;background:transparent;box-sizing:border-box;border:1px solid #2e2e2e;"></div>
<div class="t" id="t275" style="left:319.30px;top:493.00px;font-size:13px;line-height:13px;color:#2e2e2e;transform:scaleX(1.0500);">4</div>
<div style="left:366px;top:495px;width:9px;height:9px;background:transparent;box-sizing:border-box;border:1px solid #2e2e2e;"></div>
<div class="t" id="t277" style="left:381.40px;top:493.00px;font-size:13px;line-height:13px;color:#2e2e2e;transform:scaleX(1.0500);">5</div>
<div class="t" id="t278" style="left:81.30px;top:519.00px;font-size:13px;line-height:13px;color:#2e2e2e;transform:scaleX(1.0783);">Teleurstellend</div>
<div class="t" id="t279" style="left:347.80px;top:519.00px;font-size:13px;line-height:13px;color:#2e2e2e;transform:scaleX(1.0591);">Uitzonderlijk</div>
<div style="left:81px;top:551px;width:342px;height:1px;background:#44719f;"></div>
<div class="t" id="t281" style="left:81.30px;top:554.00px;font-size:13px;line-height:13px;color:#3a679b;transform:scaleX(1.1312);">Beoordeel de kwaliteit van de service die u van de</div>
<div class="t" id="t282" style="left:81.30px;top:571.00px;font-size:13px;line-height:13px;color:#3a679b;transform:scaleX(1.1615);">bediening hebt ontvangen.</div>
<div style="left:117px;top:597px;width:9px;height:9px;background:transparent;box-sizing:border-box;border:1px solid #2e2e2e;"></div>
<div class="t" id="t284" style="left:132.40px;top:595.00px;font-size:13px;line-height:13px;color:#2e2e2e;transform:scaleX(1.0500);">1</div>
<div style="left:179px;top:597px;width:9px;height:9px;background:transparent;box-sizing:border-box;border:1px solid #2e2e2e;"></div>
<div class="t" id="t286" style="left:194.20px;top:595.00px;font-size:13px;line-height:13px;color:#2e2e2e;transform:scaleX(1.0500);">2</div>
<div style="left:242px;top:597px;width:9px;height:9px;background:transparent;box-sizing:border-box;border:1px solid #2e2e2e;"></div>
<div class="t" id="t288" style="left:257.10px;top:595.00px;font-size:13px;line-height:13px;color:#2e2e2e;transform:scaleX(1.0500);">3</div>
<div style="left:304px;top:597px;width:9px;height:9px;background:transparent;box-sizing:border-box;border:1px solid #2e2e2e;"></div>
<div class="t" id="t290" style="left:319.30px;top:595.00px;font-size:13px;line-height:13px;color:#2e2e2e;transform:scaleX(1.0500);">4</div>
<div style="left:366px;top:597px;width:9px;height:9px;background:transparent;box-sizing:border-box;border:1px solid #2e2e2e;"></div>
<div class="t" id="t292" style="left:381.40px;top:595.00px;font-size:13px;line-height:13px;color:#2e2e2e;transform:scaleX(1.0500);">5</div>
<div class="t" id="t293" style="left:81.30px;top:621.00px;font-size:13px;line-height:13px;color:#2e2e2e;transform:scaleX(1.0783);">Teleurstellend</div>
<div class="t" id="t294" style="left:347.80px;top:621.00px;font-size:13px;line-height:13px;color:#2e2e2e;transform:scaleX(1.0591);">Uitzonderlijk</div>
<div style="left:81px;top:652px;width:342px;height:1px;background:#44719f;"></div>
<div class="t" id="t296" style="left:81.30px;top:656.00px;font-size:13px;line-height:13px;color:#3a679b;transform:scaleX(1.1216);">Was de bediening ...</div>
<div class="t" id="t297" style="left:81.30px;top:680.00px;font-size:13px;line-height:13px;color:#2e2e2e;transform:scaleX(1.0520);">Hoffelijk?</div>
<div style="left:334px;top:682px;width:9px;height:9px;background:transparent;box-sizing:border-box;border:1px solid #2e2e2e;"></div>
<div class="t" id="t299" style="left:348.20px;top:680.00px;font-size:13px;line-height:13px;color:#2e2e2e;transform:scaleX(1.0922);">Ja</div>
<div style="left:372px;top:681px;width:1px;height:13px;background:#3a3a3a;"></div>
<div style="left:382px;top:682px;width:9px;height:9px;background:transparent;box-sizing:border-box;border:1px solid #2e2e2e;"></div>
<div class="t" id="t302" style="left:397.00px;top:680.00px;font-size:13px;line-height:13px;color:#2e2e2e;transform:scaleX(1.0813);">Nee</div>
<div class="t" id="t303" style="left:81.30px;top:704.00px;font-size:13px;line-height:13px;color:#2e2e2e;transform:scaleX(1.1099);">Informatief?</div>
<div style="left:334px;top:706px;width:9px;height:9px;background:transparent;box-sizing:border-box;border:1px solid #2e2e2e;"></div>
<div class="t" id="t305" style="left:348.20px;top:704.00px;font-size:13px;line-height:13px;color:#2e2e2e;transform:scaleX(1.0922);">Ja</div>
<div style="left:372px;top:705px;width:1px;height:13px;background:#3a3a3a;"></div>
<div style="left:382px;top:706px;width:9px;height:9px;background:transparent;box-sizing:border-box;border:1px solid #2e2e2e;"></div>
<div class="t" id="t308" style="left:397.00px;top:704.00px;font-size:13px;line-height:13px;color:#2e2e2e;transform:scaleX(1.0813);">Nee</div>
<div class="t" id="t309" style="left:81.30px;top:729.00px;font-size:13px;line-height:13px;color:#2e2e2e;transform:scaleX(1.0955);">Snel en efficiënt?</div>
<div style="left:334px;top:731px;width:9px;height:9px;background:transparent;box-sizing:border-box;border:1px solid #2e2e2e;"></div>
<div class="t" id="t311" style="left:348.20px;top:729.00px;font-size:13px;line-height:13px;color:#2e2e2e;transform:scaleX(1.0922);">Ja</div>
<div style="left:372px;top:730px;width:1px;height:13px;background:#3a3a3a;"></div>
<div style="left:382px;top:731px;width:9px;height:9px;background:transparent;box-sizing:border-box;border:1px solid #2e2e2e;"></div>
<div class="t" id="t314" style="left:397.00px;top:729.00px;font-size:13px;line-height:13px;color:#2e2e2e;transform:scaleX(1.0813);">Nee</div>
<div style="left:81px;top:759px;width:342px;height:1px;background:#44719f;"></div>
<div class="t" id="t316" style="left:81.30px;top:763.00px;font-size:13px;line-height:13px;color:#3a679b;transform:scaleX(1.1338);">Beoordeel de kwaliteit van uw entree.</div>
<div style="left:117px;top:789px;width:9px;height:9px;background:transparent;box-sizing:border-box;border:1px solid #2e2e2e;"></div>
<div class="t" id="t318" style="left:132.40px;top:787.00px;font-size:13px;line-height:13px;color:#2e2e2e;transform:scaleX(1.0500);">1</div>
<div style="left:179px;top:789px;width:9px;height:9px;background:transparent;box-sizing:border-box;border:1px solid #2e2e2e;"></div>
<div class="t" id="t320" style="left:194.20px;top:787.00px;font-size:13px;line-height:13px;color:#2e2e2e;transform:scaleX(1.0500);">2</div>
<div style="left:242px;top:789px;width:9px;height:9px;background:transparent;box-sizing:border-box;border:1px solid #2e2e2e;"></div>
<div class="t" id="t322" style="left:257.10px;top:787.00px;font-size:13px;line-height:13px;color:#2e2e2e;transform:scaleX(1.0500);">3</div>
<div style="left:304px;top:789px;width:9px;height:9px;background:transparent;box-sizing:border-box;border:1px solid #2e2e2e;"></div>
<div class="t" id="t324" style="left:319.30px;top:787.00px;font-size:13px;line-height:13px;color:#2e2e2e;transform:scaleX(1.0500);">4</div>
<div style="left:366px;top:789px;width:9px;height:9px;background:transparent;box-sizing:border-box;border:1px solid #2e2e2e;"></div>
<div class="t" id="t326" style="left:381.40px;top:787.00px;font-size:13px;line-height:13px;color:#2e2e2e;transform:scaleX(1.0500);">5</div>
<div class="t" id="t327" style="left:81.30px;top:813.00px;font-size:13px;line-height:13px;color:#2e2e2e;transform:scaleX(1.0783);">Teleurstellend</div>
<div class="t" id="t328" style="left:347.80px;top:813.00px;font-size:13px;line-height:13px;color:#2e2e2e;transform:scaleX(1.0591);">Uitzonderlijk</div>
<div style="left:81px;top:844px;width:342px;height:1px;background:#44719f;"></div>
<div class="t" id="t330" style="left:81.30px;top:848.00px;font-size:13px;line-height:13px;color:#3a679b;transform:scaleX(1.1295);">Beoordeel de kwaliteit van uw drankje.</div>
<div style="left:117px;top:875px;width:9px;height:9px;background:transparent;box-sizing:border-box;border:1px solid #2e2e2e;"></div>
<div class="t" id="t332" style="left:132.40px;top:873.00px;font-size:13px;line-height:13px;color:#2e2e2e;transform:scaleX(1.0500);">1</div>
<div style="left:179px;top:875px;width:9px;height:9px;background:transparent;box-sizing:border-box;border:1px solid #2e2e2e;"></div>
<div class="t" id="t334" style="left:194.20px;top:873.00px;font-size:13px;line-height:13px;color:#2e2e2e;transform:scaleX(1.0500);">2</div>
<div style="left:242px;top:875px;width:9px;height:9px;background:transparent;box-sizing:border-box;border:1px solid #2e2e2e;"></div>
<div class="t" id="t336" style="left:257.10px;top:873.00px;font-size:13px;line-height:13px;color:#2e2e2e;transform:scaleX(1.0500);">3</div>
<div style="left:304px;top:875px;width:9px;height:9px;background:transparent;box-sizing:border-box;border:1px solid #2e2e2e;"></div>
<div class="t" id="t338" style="left:319.30px;top:873.00px;font-size:13px;line-height:13px;color:#2e2e2e;transform:scaleX(1.0500);">4</div>
<div style="left:366px;top:875px;width:9px;height:9px;background:transparent;box-sizing:border-box;border:1px solid #2e2e2e;"></div>
<div class="t" id="t340" style="left:381.40px;top:873.00px;font-size:13px;line-height:13px;color:#2e2e2e;transform:scaleX(1.0500);">5</div>
<div class="t" id="t341" style="left:81.30px;top:899.00px;font-size:13px;line-height:13px;color:#2e2e2e;transform:scaleX(1.0783);">Teleurstellend</div>
<div class="t" id="t342" style="left:347.80px;top:899.00px;font-size:13px;line-height:13px;color:#2e2e2e;transform:scaleX(1.0591);">Uitzonderlijk</div>
<div style="left:81px;top:930px;width:342px;height:1px;background:#44719f;"></div>
<div class="t" id="t344" style="left:81.30px;top:934.00px;font-size:13px;line-height:13px;color:#3a679b;transform:scaleX(1.0867);">Was ons restaurant schoon?</div>
<div style="left:117px;top:961px;width:9px;height:9px;background:transparent;box-sizing:border-box;border:1px solid #2e2e2e;"></div>
<div class="t" id="t346" style="left:132.40px;top:959.00px;font-size:13px;line-height:13px;color:#2e2e2e;transform:scaleX(1.0500);">1</div>
<div style="left:179px;top:961px;width:9px;height:9px;background:transparent;box-sizing:border-box;border:1px solid #2e2e2e;"></div>
<div class="t" id="t348" style="left:194.20px;top:959.00px;font-size:13px;line-height:13px;color:#2e2e2e;transform:scaleX(1.0500);">2</div>
<div style="left:242px;top:961px;width:9px;height:9px;background:transparent;box-sizing:border-box;border:1px solid #2e2e2e;"></div>
<div class="t" id="t350" style="left:257.10px;top:959.00px;font-size:13px;line-height:13px;color:#2e2e2e;transform:scaleX(1.0500);">3</div>
<div style="left:304px;top:961px;width:9px;height:9px;background:transparent;box-sizing:border-box;border:1px solid #2e2e2e;"></div>
<div class="t" id="t352" style="left:319.30px;top:959.00px;font-size:13px;line-height:13px;color:#2e2e2e;transform:scaleX(1.0500);">4</div>
<div style="left:366px;top:961px;width:9px;height:9px;background:transparent;box-sizing:border-box;border:1px solid #2e2e2e;"></div>
<div class="t" id="t354" style="left:381.40px;top:959.00px;font-size:13px;line-height:13px;color:#2e2e2e;transform:scaleX(1.0500);">5</div>
<div class="t" id="t355" style="left:81.30px;top:985.00px;font-size:13px;line-height:13px;color:#2e2e2e;transform:scaleX(1.0783);">Teleurstellend</div>
<div class="t" id="t356" style="left:347.80px;top:985.00px;font-size:13px;line-height:13px;color:#2e2e2e;transform:scaleX(1.0591);">Uitzonderlijk</div>
<div class="t" id="t357" style="left:477.20px;top:339.00px;font-size:14.5px;line-height:14.5px;color:#2b629e;font-weight:bold;font-style:italic;transform:scaleX(1.0052);">Wat vindt u van ons?</div>
<div class="t" id="t358" style="left:477.20px;top:368.00px;font-size:13px;line-height:13px;color:#2e2e2e;width:302.49px;text-align:justify;text-align-last:justify;white-space:normal;transform:scaleX(1.1230);">We doen er alles aan om u de best mogelijke</div>
<div class="t" id="t359" style="left:477.20px;top:384.00px;font-size:13px;line-height:13px;color:#2e2e2e;width:305.73px;text-align:justify;text-align-last:justify;white-space:normal;transform:scaleX(1.1111);">restaurantervaring te bieden. Daarom we zijn blij met</div>
<div class="t" id="t360" style="left:477.20px;top:401.00px;font-size:13px;line-height:13px;color:#2e2e2e;width:302.49px;text-align:justify;text-align-last:justify;white-space:normal;transform:scaleX(1.1230);">uw opmerkingen. Vul deze vragenlijst in en doe hem</div>
<div class="t" id="t361" style="left:477.20px;top:417.00px;font-size:13px;line-height:13px;color:#2e2e2e;transform:scaleX(1.1232);">in de bak in onze lobby. Dank u wel.</div>
<div style="left:477px;top:448px;width:340px;height:1px;background:#44719f;"></div>
<div class="t" id="t363" style="left:477.20px;top:452.00px;font-size:13px;line-height:13px;color:#3a679b;transform:scaleX(1.1321);">Beoordeel de kwaliteit van de service die u van uw</div>
<div class="t" id="t364" style="left:477.20px;top:468.00px;font-size:13px;line-height:13px;color:#3a679b;transform:scaleX(1.1537);">gastheer/-vrouw hebt ontvangen.</div>
<div style="left:512px;top:495px;width:9px;height:9px;background:transparent;box-sizing:border-box;border:1px solid #2e2e2e;"></div>
<div class="t" id="t366" style="left:527.40px;top:493.00px;font-size:13px;line-height:13px;color:#2e2e2e;transform:scaleX(1.0500);">1</div>
<div style="left:574px;top:495px;width:9px;height:9px;background:transparent;box-sizing:border-box;border:1px solid #2e2e2e;"></div>
<div class="t" id="t368" style="left:589.20px;top:493.00px;font-size:13px;line-height:13px;color:#2e2e2e;transform:scaleX(1.0500);">2</div>
<div style="left:637px;top:495px;width:9px;height:9px;background:transparent;box-sizing:border-box;border:1px solid #2e2e2e;"></div>
<div class="t" id="t370" style="left:652.10px;top:493.00px;font-size:13px;line-height:13px;color:#2e2e2e;transform:scaleX(1.0500);">3</div>
<div style="left:699px;top:495px;width:9px;height:9px;background:transparent;box-sizing:border-box;border:1px solid #2e2e2e;"></div>
<div class="t" id="t372" style="left:714.30px;top:493.00px;font-size:13px;line-height:13px;color:#2e2e2e;transform:scaleX(1.0500);">4</div>
<div style="left:761px;top:495px;width:9px;height:9px;background:transparent;box-sizing:border-box;border:1px solid #2e2e2e;"></div>
<div class="t" id="t374" style="left:776.40px;top:493.00px;font-size:13px;line-height:13px;color:#2e2e2e;transform:scaleX(1.0500);">5</div>
<div class="t" id="t375" style="left:477.20px;top:519.00px;font-size:13px;line-height:13px;color:#2e2e2e;transform:scaleX(1.0783);">Teleurstellend</div>
<div class="t" id="t376" style="left:741.90px;top:519.00px;font-size:13px;line-height:13px;color:#2e2e2e;transform:scaleX(1.0591);">Uitzonderlijk</div>
<div style="left:477px;top:551px;width:340px;height:1px;background:#44719f;"></div>
<div class="t" id="t378" style="left:477.20px;top:554.00px;font-size:13px;line-height:13px;color:#3a679b;transform:scaleX(1.1312);">Beoordeel de kwaliteit van de service die u van de</div>
<div class="t" id="t379" style="left:477.20px;top:571.00px;font-size:13px;line-height:13px;color:#3a679b;transform:scaleX(1.1615);">bediening hebt ontvangen.</div>
<div style="left:512px;top:597px;width:9px;height:9px;background:transparent;box-sizing:border-box;border:1px solid #2e2e2e;"></div>
<div class="t" id="t381" style="left:527.40px;top:595.00px;font-size:13px;line-height:13px;color:#2e2e2e;transform:scaleX(1.0500);">1</div>
<div style="left:574px;top:597px;width:9px;height:9px;background:transparent;box-sizing:border-box;border:1px solid #2e2e2e;"></div>
<div class="t" id="t383" style="left:589.20px;top:595.00px;font-size:13px;line-height:13px;color:#2e2e2e;transform:scaleX(1.0500);">2</div>
<div style="left:637px;top:597px;width:9px;height:9px;background:transparent;box-sizing:border-box;border:1px solid #2e2e2e;"></div>
<div class="t" id="t385" style="left:652.10px;top:595.00px;font-size:13px;line-height:13px;color:#2e2e2e;transform:scaleX(1.0500);">3</div>
<div style="left:699px;top:597px;width:9px;height:9px;background:transparent;box-sizing:border-box;border:1px solid #2e2e2e;"></div>
<div class="t" id="t387" style="left:714.30px;top:595.00px;font-size:13px;line-height:13px;color:#2e2e2e;transform:scaleX(1.0500);">4</div>
<div style="left:761px;top:597px;width:9px;height:9px;background:transparent;box-sizing:border-box;border:1px solid #2e2e2e;"></div>
<div class="t" id="t389" style="left:776.40px;top:595.00px;font-size:13px;line-height:13px;color:#2e2e2e;transform:scaleX(1.0500);">5</div>
<div class="t" id="t390" style="left:477.20px;top:621.00px;font-size:13px;line-height:13px;color:#2e2e2e;transform:scaleX(1.0783);">Teleurstellend</div>
<div class="t" id="t391" style="left:741.90px;top:621.00px;font-size:13px;line-height:13px;color:#2e2e2e;transform:scaleX(1.0591);">Uitzonderlijk</div>
<div style="left:477px;top:652px;width:340px;height:1px;background:#44719f;"></div>
<div class="t" id="t393" style="left:477.20px;top:656.00px;font-size:13px;line-height:13px;color:#3a679b;transform:scaleX(1.1216);">Was de bediening ...</div>
<div class="t" id="t394" style="left:477.20px;top:680.00px;font-size:13px;line-height:13px;color:#2e2e2e;transform:scaleX(1.0520);">Hoffelijk?</div>
<div style="left:728px;top:682px;width:9px;height:9px;background:transparent;box-sizing:border-box;border:1px solid #2e2e2e;"></div>
<div class="t" id="t396" style="left:742.30px;top:680.00px;font-size:13px;line-height:13px;color:#2e2e2e;transform:scaleX(1.0922);">Ja</div>
<div style="left:766px;top:681px;width:1px;height:13px;background:#3a3a3a;"></div>
<div style="left:776px;top:682px;width:9px;height:9px;background:transparent;box-sizing:border-box;border:1px solid #2e2e2e;"></div>
<div class="t" id="t399" style="left:791.10px;top:680.00px;font-size:13px;line-height:13px;color:#2e2e2e;transform:scaleX(1.0813);">Nee</div>
<div class="t" id="t400" style="left:477.20px;top:704.00px;font-size:13px;line-height:13px;color:#2e2e2e;transform:scaleX(1.1099);">Informatief?</div>
<div style="left:728px;top:706px;width:9px;height:9px;background:transparent;box-sizing:border-box;border:1px solid #2e2e2e;"></div>
<div class="t" id="t402" style="left:742.30px;top:704.00px;font-size:13px;line-height:13px;color:#2e2e2e;transform:scaleX(1.0922);">Ja</div>
<div style="left:766px;top:705px;width:1px;height:13px;background:#3a3a3a;"></div>
<div style="left:776px;top:706px;width:9px;height:9px;background:transparent;box-sizing:border-box;border:1px solid #2e2e2e;"></div>
<div class="t" id="t405" style="left:791.10px;top:704.00px;font-size:13px;line-height:13px;color:#2e2e2e;transform:scaleX(1.0813);">Nee</div>
<div class="t" id="t406" style="left:477.20px;top:729.00px;font-size:13px;line-height:13px;color:#2e2e2e;transform:scaleX(1.0955);">Snel en efficiënt?</div>
<div style="left:728px;top:731px;width:9px;height:9px;background:transparent;box-sizing:border-box;border:1px solid #2e2e2e;"></div>
<div class="t" id="t408" style="left:742.30px;top:729.00px;font-size:13px;line-height:13px;color:#2e2e2e;transform:scaleX(1.0922);">Ja</div>
<div style="left:766px;top:730px;width:1px;height:13px;background:#3a3a3a;"></div>
<div style="left:776px;top:731px;width:9px;height:9px;background:transparent;box-sizing:border-box;border:1px solid #2e2e2e;"></div>
<div class="t" id="t411" style="left:791.10px;top:729.00px;font-size:13px;line-height:13px;color:#2e2e2e;transform:scaleX(1.0813);">Nee</div>
<div style="left:477px;top:759px;width:340px;height:1px;background:#44719f;"></div>
<div class="t" id="t413" style="left:477.20px;top:763.00px;font-size:13px;line-height:13px;color:#3a679b;transform:scaleX(1.1338);">Beoordeel de kwaliteit van uw entree.</div>
<div style="left:512px;top:789px;width:9px;height:9px;background:transparent;box-sizing:border-box;border:1px solid #2e2e2e;"></div>
<div class="t" id="t415" style="left:527.40px;top:787.00px;font-size:13px;line-height:13px;color:#2e2e2e;transform:scaleX(1.0500);">1</div>
<div style="left:574px;top:789px;width:9px;height:9px;background:transparent;box-sizing:border-box;border:1px solid #2e2e2e;"></div>
<div class="t" id="t417" style="left:589.20px;top:787.00px;font-size:13px;line-height:13px;color:#2e2e2e;transform:scaleX(1.0500);">2</div>
<div style="left:637px;top:789px;width:9px;height:9px;background:transparent;box-sizing:border-box;border:1px solid #2e2e2e;"></div>
<div class="t" id="t419" style="left:652.10px;top:787.00px;font-size:13px;line-height:13px;color:#2e2e2e;transform:scaleX(1.0500);">3</div>
<div style="left:699px;top:789px;width:9px;height:9px;background:transparent;box-sizing:border-box;border:1px solid #2e2e2e;"></div>
<div class="t" id="t421" style="left:714.30px;top:787.00px;font-size:13px;line-height:13px;color:#2e2e2e;transform:scaleX(1.0500);">4</div>
<div style="left:761px;top:789px;width:9px;height:9px;background:transparent;box-sizing:border-box;border:1px solid #2e2e2e;"></div>
<div class="t" id="t423" style="left:776.40px;top:787.00px;font-size:13px;line-height:13px;color:#2e2e2e;transform:scaleX(1.0500);">5</div>
<div class="t" id="t424" style="left:477.20px;top:813.00px;font-size:13px;line-height:13px;color:#2e2e2e;transform:scaleX(1.0783);">Teleurstellend</div>
<div class="t" id="t425" style="left:741.90px;top:813.00px;font-size:13px;line-height:13px;color:#2e2e2e;transform:scaleX(1.0591);">Uitzonderlijk</div>
<div style="left:477px;top:844px;width:340px;height:1px;background:#44719f;"></div>
<div class="t" id="t427" style="left:477.20px;top:848.00px;font-size:13px;line-height:13px;color:#3a679b;transform:scaleX(1.1295);">Beoordeel de kwaliteit van uw drankje.</div>
<div style="left:512px;top:875px;width:9px;height:9px;background:transparent;box-sizing:border-box;border:1px solid #2e2e2e;"></div>
<div class="t" id="t429" style="left:527.40px;top:873.00px;font-size:13px;line-height:13px;color:#2e2e2e;transform:scaleX(1.0500);">1</div>
<div style="left:574px;top:875px;width:9px;height:9px;background:transparent;box-sizing:border-box;border:1px solid #2e2e2e;"></div>
<div class="t" id="t431" style="left:589.20px;top:873.00px;font-size:13px;line-height:13px;color:#2e2e2e;transform:scaleX(1.0500);">2</div>
<div style="left:637px;top:875px;width:9px;height:9px;background:transparent;box-sizing:border-box;border:1px solid #2e2e2e;"></div>
<div class="t" id="t433" style="left:652.10px;top:873.00px;font-size:13px;line-height:13px;color:#2e2e2e;transform:scaleX(1.0500);">3</div>
<div style="left:699px;top:875px;width:9px;height:9px;background:transparent;box-sizing:border-box;border:1px solid #2e2e2e;"></div>
<div class="t" id="t435" style="left:714.30px;top:873.00px;font-size:13px;line-height:13px;color:#2e2e2e;transform:scaleX(1.0500);">4</div>
<div style="left:761px;top:875px;width:9px;height:9px;background:transparent;box-sizing:border-box;border:1px solid #2e2e2e;"></div>
<div class="t" id="t437" style="left:776.40px;top:873.00px;font-size:13px;line-height:13px;color:#2e2e2e;transform:scaleX(1.0500);">5</div>
<div class="t" id="t438" style="left:477.20px;top:899.00px;font-size:13px;line-height:13px;color:#2e2e2e;transform:scaleX(1.0783);">Teleurstellend</div>
<div class="t" id="t439" style="left:741.90px;top:899.00px;font-size:13px;line-height:13px;color:#2e2e2e;transform:scaleX(1.0591);">Uitzonderlijk</div>
<div style="left:477px;top:930px;width:340px;height:1px;background:#44719f;"></div>
<div class="t" id="t441" style="left:477.20px;top:934.00px;font-size:13px;line-height:13px;color:#3a679b;transform:scaleX(1.0867);">Was ons restaurant schoon?</div>
<div style="left:512px;top:961px;width:9px;height:9px;background:transparent;box-sizing:border-box;border:1px solid #2e2e2e;"></div>
<div class="t" id="t443" style="left:527.40px;top:959.00px;font-size:13px;line-height:13px;color:#2e2e2e;transform:scaleX(1.0500);">1</div>
<div style="left:574px;top:961px;width:9px;height:9px;background:transparent;box-sizing:border-box;border:1px solid #2e2e2e;"></div>
<div class="t" id="t445" style="left:589.20px;top:959.00px;font-size:13px;line-height:13px;color:#2e2e2e;transform:scaleX(1.0500);">2</div>
<div style="left:637px;top:961px;width:9px;height:9px;background:transparent;box-sizing:border-box;border:1px solid #2e2e2e;"></div>
<div class="t" id="t447" style="left:652.10px;top:959.00px;font-size:13px;line-height:13px;color:#2e2e2e;transform:scaleX(1.0500);">3</div>
<div style="left:699px;top:961px;width:9px;height:9px;background:transparent;box-sizing:border-box;border:1px solid #2e2e2e;"></div>
<div class="t" id="t449" style="left:714.30px;top:959.00px;font-size:13px;line-height:13px;color:#2e2e2e;transform:scaleX(1.0500);">4</div>
<div style="left:761px;top:961px;width:9px;height:9px;background:transparent;box-sizing:border-box;border:1px solid #2e2e2e;"></div>
<div class="t" id="t451" style="left:776.40px;top:959.00px;font-size:13px;line-height:13px;color:#2e2e2e;transform:scaleX(1.0500);">5</div>
<div class="t" id="t452" style="left:477.20px;top:985.00px;font-size:13px;line-height:13px;color:#2e2e2e;transform:scaleX(1.0783);">Teleurstellend</div>
<div class="t" id="t453" style="left:741.90px;top:985.00px;font-size:13px;line-height:13px;color:#2e2e2e;transform:scaleX(1.0591);">Uitzonderlijk</div>
<div class="t" id="t454" style="left:891.30px;top:339.00px;font-size:14.5px;line-height:14.5px;color:#2b629e;font-weight:bold;font-style:italic;transform:scaleX(1.0388);">Vervolg</div>
<div style="left:891px;top:382px;width:341px;height:1px;background:#44719f;"></div>
<div class="t" id="t456" style="left:891.30px;top:386.00px;font-size:13px;line-height:13px;color:#3a679b;transform:scaleX(1.1187);">Bent u van plan om nog eens terug te komen in ons</div>
<div class="t" id="t457" style="left:891.30px;top:402.00px;font-size:13px;line-height:13px;color:#3a679b;transform:scaleX(1.0872);">restaurant?</div>
<div style="left:892px;top:430px;width:9px;height:9px;background:transparent;box-sizing:border-box;border:1px solid #2e2e2e;"></div>
<div class="t" id="t459" style="left:905.70px;top:428.00px;font-size:13px;line-height:13px;color:#2e2e2e;transform:scaleX(1.0922);">Ja</div>
<div style="left:930px;top:429px;width:1px;height:13px;background:#3a3a3a;"></div>
<div style="left:939px;top:430px;width:9px;height:9px;background:transparent;box-sizing:border-box;border:1px solid #2e2e2e;"></div>
<div class="t" id="t462" style="left:954.50px;top:428.00px;font-size:13px;line-height:13px;color:#2e2e2e;transform:scaleX(1.0813);">Nee</div>
<div style="left:891px;top:466px;width:341px;height:1px;background:#44719f;"></div>
<div class="t" id="t464" style="left:891.30px;top:469.00px;font-size:13px;line-height:13px;color:#3a679b;transform:scaleX(1.1218);">Zou u ons restaurant aanbevelen aan een vriend?</div>
<div style="left:892px;top:499px;width:9px;height:9px;background:transparent;box-sizing:border-box;border:1px solid #2e2e2e;"></div>
<div class="t" id="t466" style="left:905.70px;top:497.00px;font-size:13px;line-height:13px;color:#2e2e2e;transform:scaleX(1.0922);">Ja</div>
<div style="left:930px;top:498px;width:1px;height:13px;background:#3a3a3a;"></div>
<div style="left:939px;top:499px;width:9px;height:9px;background:transparent;box-sizing:border-box;border:1px solid #2e2e2e;"></div>
<div class="t" id="t469" style="left:954.50px;top:497.00px;font-size:13px;line-height:13px;color:#2e2e2e;transform:scaleX(1.0813);">Nee</div>
<div style="left:891px;top:535px;width:341px;height:1px;background:#44719f;"></div>
<div class="t" id="t471" style="left:891.30px;top:538.00px;font-size:13px;line-height:13px;color:#3a679b;transform:scaleX(1.1304);">Waarom wel of niet?</div>
<div style="left:891px;top:580px;width:341px;height:1px;background:#0a0a0a;"></div>
<div style="left:891px;top:581px;width:341px;height:1px;background:rgba(0,0,0,0.08);"></div>
<div style="left:891px;top:600px;width:341px;height:1px;background:#0a0a0a;"></div>
<div style="left:891px;top:601px;width:341px;height:1px;background:rgba(0,0,0,0.08);"></div>
<div style="left:891px;top:617px;width:341px;height:1px;background:#44719f;"></div>
<div class="t" id="t477" style="left:891.30px;top:621.00px;font-size:13px;line-height:13px;color:#3a679b;transform:scaleX(1.1281);">Als uw bezoek was om een speciale gelegenheid te</div>
<div class="t" id="t478" style="left:891.30px;top:637.00px;font-size:13px;line-height:13px;color:#3a679b;transform:scaleX(1.1615);">vieren, hoe hadden we het dan gedenkwaardiger</div>
<div class="t" id="t479" style="left:891.30px;top:653.00px;font-size:13px;line-height:13px;color:#3a679b;transform:scaleX(1.1112);">kunnen maken?</div>
<div style="left:891px;top:695px;width:341px;height:1px;background:#0a0a0a;"></div>
<div style="left:891px;top:696px;width:341px;height:1px;background:rgba(0,0,0,0.08);"></div>
<div style="left:891px;top:715px;width:341px;height:1px;background:#0a0a0a;"></div>
<div style="left:891px;top:716px;width:341px;height:1px;background:rgba(0,0,0,0.08);"></div>
<div style="left:891px;top:732px;width:341px;height:1px;background:#44719f;"></div>
<div class="t" id="t485" style="left:891.30px;top:736.00px;font-size:13px;line-height:13px;color:#3a679b;transform:scaleX(1.1281);">Welk gerecht hebt u besteld?</div>
<div style="left:891px;top:777px;width:341px;height:1px;background:#0a0a0a;"></div>
<div style="left:891px;top:778px;width:341px;height:1px;background:rgba(0,0,0,0.08);"></div>
<div style="left:891px;top:797px;width:341px;height:1px;background:#0a0a0a;"></div>
<div style="left:891px;top:798px;width:341px;height:1px;background:rgba(0,0,0,0.08);"></div>
<div style="left:891px;top:814px;width:341px;height:1px;background:#44719f;"></div>
<div class="t" id="t491" style="left:891.30px;top:818.00px;font-size:13px;line-height:13px;color:#3a679b;transform:scaleX(1.1337);">Welke gerechten zou u willen toevoegen aan ons</div>
<div class="t" id="t492" style="left:891.30px;top:835.00px;font-size:13px;line-height:13px;color:#3a679b;transform:scaleX(1.1069);">menu?</div>
<div style="left:891px;top:876px;width:341px;height:1px;background:#0a0a0a;"></div>
<div style="left:891px;top:877px;width:341px;height:1px;background:rgba(0,0,0,0.08);"></div>
<div style="left:891px;top:896px;width:341px;height:1px;background:#0a0a0a;"></div>
<div style="left:891px;top:897px;width:341px;height:1px;background:rgba(0,0,0,0.08);"></div>
<div style="left:891px;top:913px;width:341px;height:1px;background:#44719f;"></div>
<div class="t" id="t498" style="left:891.30px;top:917.00px;font-size:13px;line-height:13px;color:#3a679b;transform:scaleX(1.1467);">Deel eventuele aanvullende opmerkingen of</div>
<div class="t" id="t499" style="left:891.30px;top:934.00px;font-size:13px;line-height:13px;color:#3a679b;transform:scaleX(1.0446);">suggesties.</div>
<div style="left:891px;top:974px;width:341px;height:1px;background:#0a0a0a;"></div>
<div style="left:891px;top:975px;width:341px;height:1px;background:rgba(0,0,0,0.08);"></div>
<div style="left:891px;top:994px;width:341px;height:1px;background:#0a0a0a;"></div>
<div style="left:891px;top:995px;width:341px;height:1px;background:rgba(0,0,0,0.08);"></div>
<div class="t" id="t504" style="left:1287.20px;top:339.00px;font-size:14.5px;line-height:14.5px;color:#2b629e;font-weight:bold;font-style:italic;transform:scaleX(1.0388);">Vervolg</div>
<div style="left:1287px;top:382px;width:340px;height:1px;background:#44719f;"></div>
<div class="t" id="t506" style="left:1287.20px;top:386.00px;font-size:13px;line-height:13px;color:#3a679b;transform:scaleX(1.1187);">Bent u van plan om nog eens terug te komen in ons</div>
<div class="t" id="t507" style="left:1287.20px;top:402.00px;font-size:13px;line-height:13px;color:#3a679b;transform:scaleX(1.0872);">restaurant?</div>
<div style="left:1288px;top:430px;width:9px;height:9px;background:transparent;box-sizing:border-box;border:1px solid #2e2e2e;"></div>
<div class="t" id="t509" style="left:1301.60px;top:428.00px;font-size:13px;line-height:13px;color:#2e2e2e;transform:scaleX(1.0922);">Ja</div>
<div style="left:1325px;top:429px;width:1px;height:13px;background:#3a3a3a;"></div>
<div style="left:1335px;top:430px;width:9px;height:9px;background:transparent;box-sizing:border-box;border:1px solid #2e2e2e;"></div>
<div class="t" id="t512" style="left:1350.40px;top:428.00px;font-size:13px;line-height:13px;color:#2e2e2e;transform:scaleX(1.0813);">Nee</div>
<div style="left:1287px;top:466px;width:340px;height:1px;background:#44719f;"></div>
<div class="t" id="t514" style="left:1287.20px;top:469.00px;font-size:13px;line-height:13px;color:#3a679b;transform:scaleX(1.1218);">Zou u ons restaurant aanbevelen aan een vriend?</div>
<div style="left:1288px;top:499px;width:9px;height:9px;background:transparent;box-sizing:border-box;border:1px solid #2e2e2e;"></div>
<div class="t" id="t516" style="left:1301.60px;top:497.00px;font-size:13px;line-height:13px;color:#2e2e2e;transform:scaleX(1.0922);">Ja</div>
<div style="left:1325px;top:498px;width:1px;height:13px;background:#3a3a3a;"></div>
<div style="left:1335px;top:499px;width:9px;height:9px;background:transparent;box-sizing:border-box;border:1px solid #2e2e2e;"></div>
<div class="t" id="t519" style="left:1350.40px;top:497.00px;font-size:13px;line-height:13px;color:#2e2e2e;transform:scaleX(1.0813);">Nee</div>
<div style="left:1287px;top:535px;width:340px;height:1px;background:#44719f;"></div>
<div class="t" id="t521" style="left:1287.20px;top:538.00px;font-size:13px;line-height:13px;color:#3a679b;transform:scaleX(1.1304);">Waarom wel of niet?</div>
<div style="left:1287px;top:580px;width:340px;height:1px;background:#0a0a0a;"></div>
<div style="left:1287px;top:581px;width:340px;height:1px;background:rgba(0,0,0,0.08);"></div>
<div style="left:1287px;top:600px;width:340px;height:1px;background:#0a0a0a;"></div>
<div style="left:1287px;top:601px;width:340px;height:1px;background:rgba(0,0,0,0.08);"></div>
<div style="left:1287px;top:617px;width:340px;height:1px;background:#44719f;"></div>
<div class="t" id="t527" style="left:1287.20px;top:621.00px;font-size:13px;line-height:13px;color:#3a679b;transform:scaleX(1.1281);">Als uw bezoek was om een speciale gelegenheid te</div>
<div class="t" id="t528" style="left:1287.20px;top:637.00px;font-size:13px;line-height:13px;color:#3a679b;transform:scaleX(1.1615);">vieren, hoe hadden we het dan gedenkwaardiger</div>
<div class="t" id="t529" style="left:1287.20px;top:653.00px;font-size:13px;line-height:13px;color:#3a679b;transform:scaleX(1.1112);">kunnen maken?</div>
<div style="left:1287px;top:695px;width:340px;height:1px;background:#0a0a0a;"></div>
<div style="left:1287px;top:696px;width:340px;height:1px;background:rgba(0,0,0,0.08);"></div>
<div style="left:1287px;top:715px;width:340px;height:1px;background:#0a0a0a;"></div>
<div style="left:1287px;top:716px;width:340px;height:1px;background:rgba(0,0,0,0.08);"></div>
<div style="left:1287px;top:732px;width:340px;height:1px;background:#44719f;"></div>
<div class="t" id="t535" style="left:1287.20px;top:736.00px;font-size:13px;line-height:13px;color:#3a679b;transform:scaleX(1.1281);">Welk gerecht hebt u besteld?</div>
<div style="left:1287px;top:777px;width:340px;height:1px;background:#0a0a0a;"></div>
<div style="left:1287px;top:778px;width:340px;height:1px;background:rgba(0,0,0,0.08);"></div>
<div style="left:1287px;top:797px;width:340px;height:1px;background:#0a0a0a;"></div>
<div style="left:1287px;top:798px;width:340px;height:1px;background:rgba(0,0,0,0.08);"></div>
<div style="left:1287px;top:814px;width:340px;height:1px;background:#44719f;"></div>
<div class="t" id="t541" style="left:1287.20px;top:818.00px;font-size:13px;line-height:13px;color:#3a679b;transform:scaleX(1.1337);">Welke gerechten zou u willen toevoegen aan ons</div>
<div class="t" id="t542" style="left:1287.20px;top:835.00px;font-size:13px;line-height:13px;color:#3a679b;transform:scaleX(1.1069);">menu?</div>
<div style="left:1287px;top:876px;width:340px;height:1px;background:#0a0a0a;"></div>
<div style="left:1287px;top:877px;width:340px;height:1px;background:rgba(0,0,0,0.08);"></div>
<div style="left:1287px;top:896px;width:340px;height:1px;background:#0a0a0a;"></div>
<div style="left:1287px;top:897px;width:340px;height:1px;background:rgba(0,0,0,0.08);"></div>
<div style="left:1287px;top:913px;width:340px;height:1px;background:#44719f;"></div>
<div class="t" id="t548" style="left:1287.20px;top:917.00px;font-size:13px;line-height:13px;color:#3a679b;transform:scaleX(1.1467);">Deel eventuele aanvullende opmerkingen of</div>
<div class="t" id="t549" style="left:1287.20px;top:934.00px;font-size:13px;line-height:13px;color:#3a679b;transform:scaleX(1.0446);">suggesties.</div>
<div style="left:1287px;top:974px;width:340px;height:1px;background:#0a0a0a;"></div>
<div style="left:1287px;top:975px;width:340px;height:1px;background:rgba(0,0,0,0.08);"></div>
<div style="left:1287px;top:994px;width:340px;height:1px;background:#0a0a0a;"></div>
<div style="left:1287px;top:995px;width:340px;height:1px;background:rgba(0,0,0,0.08);"></div>
<div style="left:178px;top:283px;width:1px;height:19px;background:#000000;"></div>
<div class="t" style="left:7.5px;top:234.2px;font-size:9.5px;line-height:9.5px;font-weight:bold;color:#333;transform:rotate(-90deg);transform-origin:0 0;width:7.2px;">1</div>
<div style="left:11px;top:241px;width:2px;height:1px;background:#3c3c3c;"></div>
<div style="left:10px;top:250px;width:5px;height:1px;background:#3c3c3c;"></div>
<div style="left:11px;top:260px;width:2px;height:1px;background:#3c3c3c;"></div>
<div style="left:11px;top:278px;width:2px;height:1px;background:#3c3c3c;"></div>
<div style="left:10px;top:288px;width:5px;height:1px;background:#3c3c3c;"></div>
<div style="left:11px;top:297px;width:2px;height:1px;background:#3c3c3c;"></div>
<div class="t" style="left:7.5px;top:310.0px;font-size:9.5px;line-height:9.5px;font-weight:bold;color:#333;transform:rotate(-90deg);transform-origin:0 0;width:7.2px;">1</div>
<div style="left:11px;top:316px;width:2px;height:1px;background:#3c3c3c;"></div>
<div style="left:10px;top:326px;width:5px;height:1px;background:#3c3c3c;"></div>
<div style="left:11px;top:335px;width:2px;height:1px;background:#3c3c3c;"></div>
<div class="t" style="left:7.5px;top:347.9px;font-size:9.5px;line-height:9.5px;font-weight:bold;color:#333;transform:rotate(-90deg);transform-origin:0 0;width:7.2px;">2</div>
<div style="left:11px;top:354px;width:2px;height:1px;background:#3c3c3c;"></div>
<div style="left:10px;top:364px;width:5px;height:1px;background:#3c3c3c;"></div>
<div style="left:11px;top:373px;width:2px;height:1px;background:#3c3c3c;"></div>
<div class="t" style="left:7.5px;top:385.8px;font-size:9.5px;line-height:9.5px;font-weight:bold;color:#333;transform:rotate(-90deg);transform-origin:0 0;width:7.2px;">3</div>
<div style="left:11px;top:392px;width:2px;height:1px;background:#3c3c3c;"></div>
<div style="left:10px;top:402px;width:5px;height:1px;background:#3c3c3c;"></div>
<div style="left:11px;top:411px;width:2px;height:1px;background:#3c3c3c;"></div>
<div class="t" style="left:7.5px;top:423.7px;font-size:9.5px;line-height:9.5px;font-weight:bold;color:#333;transform:rotate(-90deg);transform-origin:0 0;width:7.2px;">4</div>
<div style="left:11px;top:430px;width:2px;height:1px;background:#3c3c3c;"></div>
<div style="left:10px;top:440px;width:5px;height:1px;background:#3c3c3c;"></div>
<div style="left:11px;top:449px;width:2px;height:1px;background:#3c3c3c;"></div>
<div class="t" style="left:7.5px;top:461.6px;font-size:9.5px;line-height:9.5px;font-weight:bold;color:#333;transform:rotate(-90deg);transform-origin:0 0;width:7.2px;">5</div>
<div style="left:11px;top:468px;width:2px;height:1px;background:#3c3c3c;"></div>
<div style="left:10px;top:477px;width:5px;height:1px;background:#3c3c3c;"></div>
<div style="left:11px;top:487px;width:2px;height:1px;background:#3c3c3c;"></div>
<div class="t" style="left:7.5px;top:499.5px;font-size:9.5px;line-height:9.5px;font-weight:bold;color:#333;transform:rotate(-90deg);transform-origin:0 0;width:7.2px;">6</div>
<div style="left:11px;top:506px;width:2px;height:1px;background:#3c3c3c;"></div>
<div style="left:10px;top:515px;width:5px;height:1px;background:#3c3c3c;"></div>
<div style="left:11px;top:525px;width:2px;height:1px;background:#3c3c3c;"></div>
<div class="t" style="left:7.5px;top:537.4px;font-size:9.5px;line-height:9.5px;font-weight:bold;color:#333;transform:rotate(-90deg);transform-origin:0 0;width:7.2px;">7</div>
<div style="left:11px;top:544px;width:2px;height:1px;background:#3c3c3c;"></div>
<div style="left:10px;top:553px;width:5px;height:1px;background:#3c3c3c;"></div>
<div style="left:11px;top:563px;width:2px;height:1px;background:#3c3c3c;"></div>
<div class="t" style="left:7.5px;top:575.3px;font-size:9.5px;line-height:9.5px;font-weight:bold;color:#333;transform:rotate(-90deg);transform-origin:0 0;width:7.2px;">8</div>
<div style="left:11px;top:582px;width:2px;height:1px;background:#3c3c3c;"></div>
<div style="left:10px;top:591px;width:5px;height:1px;background:#3c3c3c;"></div>
<div style="left:11px;top:601px;width:2px;height:1px;background:#3c3c3c;"></div>
<div class="t" style="left:7.5px;top:613.2px;font-size:9.5px;line-height:9.5px;font-weight:bold;color:#333;transform:rotate(-90deg);transform-origin:0 0;width:7.2px;">9</div>
<div style="left:11px;top:620px;width:2px;height:1px;background:#3c3c3c;"></div>
<div style="left:10px;top:629px;width:5px;height:1px;background:#3c3c3c;"></div>
<div style="left:11px;top:639px;width:2px;height:1px;background:#3c3c3c;"></div>
<div class="t" style="left:7.5px;top:653.7px;font-size:9.5px;line-height:9.5px;font-weight:bold;color:#333;transform:rotate(-90deg);transform-origin:0 0;width:12.4px;">10</div>
<div style="left:11px;top:657px;width:2px;height:1px;background:#3c3c3c;"></div>
<div style="left:10px;top:667px;width:5px;height:1px;background:#3c3c3c;"></div>
<div style="left:11px;top:676px;width:2px;height:1px;background:#3c3c3c;"></div>
<div class="t" style="left:7.5px;top:691.6px;font-size:9.5px;line-height:9.5px;font-weight:bold;color:#333;transform:rotate(-90deg);transform-origin:0 0;width:12.4px;">11</div>
<div style="left:11px;top:695px;width:2px;height:1px;background:#3c3c3c;"></div>
<div style="left:10px;top:705px;width:5px;height:1px;background:#3c3c3c;"></div>
<div style="left:11px;top:714px;width:2px;height:1px;background:#3c3c3c;"></div>
<div class="t" style="left:7.5px;top:729.5px;font-size:9.5px;line-height:9.5px;font-weight:bold;color:#333;transform:rotate(-90deg);transform-origin:0 0;width:12.4px;">12</div>
<div style="left:11px;top:733px;width:2px;height:1px;background:#3c3c3c;"></div>
<div style="left:10px;top:743px;width:5px;height:1px;background:#3c3c3c;"></div>
<div style="left:11px;top:752px;width:2px;height:1px;background:#3c3c3c;"></div>
<div class="t" style="left:7.5px;top:767.4px;font-size:9.5px;line-height:9.5px;font-weight:bold;color:#333;transform:rotate(-90deg);transform-origin:0 0;width:12.4px;">13</div>
<div style="left:11px;top:771px;width:2px;height:1px;background:#3c3c3c;"></div>
<div style="left:10px;top:781px;width:5px;height:1px;background:#3c3c3c;"></div>
<div style="left:11px;top:790px;width:2px;height:1px;background:#3c3c3c;"></div>
<div class="t" style="left:7.5px;top:805.3px;font-size:9.5px;line-height:9.5px;font-weight:bold;color:#333;transform:rotate(-90deg);transform-origin:0 0;width:12.4px;">14</div>
<div style="left:11px;top:809px;width:2px;height:1px;background:#3c3c3c;"></div>
<div style="left:10px;top:819px;width:5px;height:1px;background:#3c3c3c;"></div>
<div style="left:11px;top:828px;width:2px;height:1px;background:#3c3c3c;"></div>
<div class="t" style="left:7.5px;top:843.2px;font-size:9.5px;line-height:9.5px;font-weight:bold;color:#333;transform:rotate(-90deg);transform-origin:0 0;width:12.4px;">15</div>
<div style="left:11px;top:847px;width:2px;height:1px;background:#3c3c3c;"></div>
<div style="left:10px;top:856px;width:5px;height:1px;background:#3c3c3c;"></div>
<div style="left:11px;top:866px;width:2px;height:1px;background:#3c3c3c;"></div>
<div class="t" style="left:7.5px;top:881.1px;font-size:9.5px;line-height:9.5px;font-weight:bold;color:#333;transform:rotate(-90deg);transform-origin:0 0;width:12.4px;">16</div>
<div style="left:11px;top:885px;width:2px;height:1px;background:#3c3c3c;"></div>
<div style="left:10px;top:894px;width:5px;height:1px;background:#3c3c3c;"></div>
<div style="left:11px;top:904px;width:2px;height:1px;background:#3c3c3c;"></div>
<div class="t" style="left:7.5px;top:919.0px;font-size:9.5px;line-height:9.5px;font-weight:bold;color:#333;transform:rotate(-90deg);transform-origin:0 0;width:12.4px;">17</div>
<div style="left:11px;top:923px;width:2px;height:1px;background:#3c3c3c;"></div>
<div style="left:10px;top:932px;width:5px;height:1px;background:#3c3c3c;"></div>
<div style="left:11px;top:942px;width:2px;height:1px;background:#3c3c3c;"></div>
<div class="t" style="left:7.5px;top:956.9px;font-size:9.5px;line-height:9.5px;font-weight:bold;color:#333;transform:rotate(-90deg);transform-origin:0 0;width:12.4px;">18</div>
<div style="left:11px;top:961px;width:2px;height:1px;background:#3c3c3c;"></div>
<div style="left:10px;top:970px;width:5px;height:1px;background:#3c3c3c;"></div>
<div style="left:11px;top:980px;width:2px;height:1px;background:#3c3c3c;"></div>
<div class="t" style="left:7.5px;top:994.8px;font-size:9.5px;line-height:9.5px;font-weight:bold;color:#333;transform:rotate(-90deg);transform-origin:0 0;width:12.4px;">19</div>
<div style="left:11px;top:999px;width:2px;height:1px;background:#3c3c3c;"></div>
<div style="left:1700px;top:192px;width:1px;height:818px;background:#c6c6c6;"></div>
<div class="t" id="t637" style="left:1714.90px;top:207.00px;font-size:20px;line-height:20px;color:#3f64a3;">Stijlen</div>
<svg style="position:absolute;left:1850px;top:210px;" width="10" height="6" viewBox="0 0 10 6"><path d="M0 0h10L5 6z" fill="#666"/></svg>
<svg style="position:absolute;left:1890px;top:208px;" width="12" height="11" viewBox="0 0 12 11"><path d="M1 0.5l10 10M11 0.5l-10 10" stroke="#555" stroke-width="1.6"/></svg>
<div style="left:1714px;top:237px;width:192px;height:687px;background:#ffffff;"></div>
<div class="t" id="t641" style="left:1722.30px;top:242.00px;font-size:11.5px;line-height:11.5px;color:#262626;transform:scaleX(0.9418);">Alles wissen</div>
<div class="t" id="t642" style="left:1722.30px;top:262.00px;font-size:11.5px;line-height:11.5px;color:#262626;transform:scaleX(0.9533);">Standaard</div>
<div class="t" id="t643" style="left:1870.50px;top:262.00px;font-size:11.5px;line-height:11.5px;color:#555555;font-weight:bold;transform:scaleX(1.4829);">¶</div>
<div class="t" id="t644" style="left:1722.30px;top:282.00px;font-size:11.5px;line-height:11.5px;color:#262626;transform:scaleX(0.9757);">Beoordeling</div>
<div class="t" id="t645" style="left:1870.50px;top:282.00px;font-size:11.5px;line-height:11.5px;color:#555555;font-weight:bold;transform:scaleX(1.4829);">¶</div>
<div class="t" id="t646" style="left:1722.30px;top:302.00px;font-size:11.5px;line-height:11.5px;color:#262626;transform:scaleX(0.9862);">Beoordelingen 1-5</div>
<div class="t" id="t647" style="left:1870.50px;top:302.00px;font-size:11.5px;line-height:11.5px;color:#555555;font-weight:bold;transform:scaleX(1.4829);">¶</div>
<div class="t" id="t648" style="left:1722.30px;top:322.00px;font-size:11.5px;line-height:11.5px;color:#262626;transform:scaleX(0.9412);">Geen afstand</div>
<div class="t" id="t649" style="left:1870.50px;top:322.00px;font-size:11.5px;line-height:11.5px;color:#555555;font-weight:bold;transform:scaleX(1.4829);">¶</div>
<div class="t" id="t650" style="left:1722.30px;top:342.00px;font-size:11.5px;line-height:11.5px;color:#262626;transform:scaleX(0.9181);">Kop 1</div>
<div class="t" id="t651" style="left:1868.00px;top:341.00px;font-size:11px;line-height:11px;color:#666666;font-weight:bold;transform:scaleX(0.9796);">¶a</div>
<div style="left:1868px;top:352.4px;width:12px;height:1px;background:#777;"></div>
<div class="t" id="t653" style="left:1722.30px;top:362.00px;font-size:11.5px;line-height:11.5px;color:#262626;transform:scaleX(0.9447);">Kop 2</div>
<div class="t" id="t654" style="left:1868.00px;top:361.00px;font-size:11px;line-height:11px;color:#666666;font-weight:bold;transform:scaleX(0.9796);">¶a</div>
<div style="left:1868px;top:372.4px;width:12px;height:1px;background:#777;"></div>
<div class="t" id="t656" style="left:1722.30px;top:382.00px;font-size:11.5px;line-height:11.5px;color:#262626;transform:scaleX(0.9447);">Kop 3</div>
<div class="t" id="t657" style="left:1868.00px;top:381.00px;font-size:11px;line-height:11px;color:#666666;font-weight:bold;transform:scaleX(0.9796);">¶a</div>
<div style="left:1868px;top:392.4px;width:12px;height:1px;background:#777;"></div>
<div class="t" id="t659" style="left:1722.30px;top:402.00px;font-size:11.5px;line-height:11.5px;color:#262626;transform:scaleX(0.9577);">Meerkeuze | 2</div>
<div class="t" id="t660" style="left:1870.50px;top:402.00px;font-size:11.5px;line-height:11.5px;color:#555555;font-weight:bold;transform:scaleX(1.4829);">¶</div>
<div class="t" id="t661" style="left:1722.30px;top:422.00px;font-size:11.5px;line-height:11.5px;color:#262626;transform:scaleX(0.9760);">Titel</div>
<div class="t" id="t662" style="left:1868.00px;top:421.00px;font-size:11px;line-height:11px;color:#666666;font-weight:bold;transform:scaleX(0.9796);">¶a</div>
<div style="left:1868px;top:432.4px;width:12px;height:1px;background:#777;"></div>
<div class="t" id="t664" style="left:1722.30px;top:442.00px;font-size:11.5px;line-height:11.5px;color:#262626;transform:scaleX(0.9447);">Kop 4</div>
<div class="t" id="t665" style="left:1868.00px;top:441.00px;font-size:11px;line-height:11px;color:#666666;font-weight:bold;transform:scaleX(0.9796);">¶a</div>
<div style="left:1868px;top:452.4px;width:12px;height:1px;background:#777;"></div>
<div style="left:1714px;top:417px;width:170px;height:20px;background:transparent;box-sizing:border-box;border:2px solid #2b4f87;"></div>
<div style="left:1714px;top:928.3px;width:13px;height:13px;background:#ffffff;box-sizing:border-box;border:1px solid #c3c3c3;"></div>
<div class="t" id="t669" style="left:1732.70px;top:930.00px;font-size:12px;line-height:12px;color:#444444;transform:scaleX(0.9622);">Voorbeeld weergeven</div>
<div style="left:1714px;top:950.1px;width:13px;height:13px;background:#ffffff;box-sizing:border-box;border:1px solid #c3c3c3;"></div>
<div class="t" id="t671" style="left:1732.70px;top:952.00px;font-size:12px;line-height:12px;color:#444444;transform:scaleX(0.9700);">Geen gekoppelde stijlen</div>
<div style="left:1714px;top:971px;width:24px;height:24px;background:#ffffff;box-sizing:border-box;border:1px solid #c8c8c8;"></div>
<div style="left:1747px;top:971px;width:24px;height:24px;background:#ffffff;box-sizing:border-box;border:1px solid #c8c8c8;"></div>
<div style="left:1780px;top:971px;width:24px;height:24px;background:#ffffff;box-sizing:border-box;border:1px solid #c8c8c8;"></div>
<svg style="position:absolute;left:1716px;top:973px;" width="20" height="20" viewBox="0 0 20 20"><circle cx="5" cy="5" r="2" fill="#f3b941"/><path d="M5 1v8M1 5h8M2 2l6 6M8 2l-6 6" stroke="#f3b941" stroke-width="0.8"/><text x="3" y="15" font-family="Liberation Serif" font-style="italic" font-weight="bold" font-size="11" fill="#a35fb5">A</text><text x="9" y="15" font-family="Liberation Serif" font-style="italic" font-weight="bold" font-size="11" fill="#3b73b9">A</text><rect x="6" y="16" width="12" height="1.5" fill="#3b73b9"/></svg>
<svg style="position:absolute;left:1749px;top:973px;" width="20" height="20" viewBox="0 0 20 20"><text x="2" y="10" font-family="Liberation Serif" font-style="italic" font-weight="bold" font-size="11" fill="#a35fb5">A</text><text x="8" y="10" font-family="Liberation Serif" font-style="italic" font-weight="bold" font-size="11" fill="#3b73b9">A</text><path d="M4 13h4M6 15h3" stroke="#3b73b9"/><circle cx="14" cy="13" r="3" fill="none" stroke="#555" stroke-width="1.4"/><path d="M12 15l-3 3" stroke="#555" stroke-width="1.6"/></svg>
<svg style="position:absolute;left:1782px;top:973px;" width="20" height="20" viewBox="0 0 20 20"><text x="2" y="10" font-family="Liberation Serif" font-style="italic" font-weight="bold" font-size="11" fill="#a35fb5">A</text><text x="8" y="10" font-family="Liberation Serif" font-style="italic" font-weight="bold" font-size="11" fill="#3b73b9">A</text><path d="M4 13h4M6 15h3" stroke="#3b73b9"/><path d="M17 9l-7 7-1 2 2-1 7-7z" fill="#3b73b9"/></svg>
<div style="left:1813px;top:971px;width:61px;height:25px;background:#ffffff;box-sizing:border-box;border:1px solid #c8c8c8;"></div>
<div class="t" id="t679" style="left:1822.60px;top:978.00px;font-size:12px;line-height:12px;color:#262626;transform:scaleX(0.9354);">Opties...</div>
<div style="left:0px;top:1010px;width:1920px;height:22px;background:#f3f3f3;box-sizing:border-box;border-top:1px solid #c6c6c6;"></div>
<div class="t" id="t681" style="left:8.60px;top:1015.00px;font-size:12px;line-height:12px;color:#444444;transform:scaleX(0.9118);">Pagina 1 van 2</div>
<div class="t" id="t682" style="left:100.80px;top:1015.00px;font-size:12px;line-height:12px;color:#444444;transform:scaleX(0.9742);">490 woorden</div>
<svg style="position:absolute;left:188px;top:1014px;" width="16" height="13" viewBox="0 0 16 13"><path d="M0.5 1.5c2-1 5-1 7 0v11c-2-1-5-1-7 0z" fill="none" stroke="#555"/><path d="M7.5 1.5c2-1 5-1 7 0v5" fill="none" stroke="#555"/><path d="M7.5 12.5c1-.5 2-.7 3-.8" fill="none" stroke="#555"/><path d="M14 4l-4 5-.5 2 2-1 4-5z" fill="none" stroke="#555"/></svg>
<div class="t" id="t684" style="left:219.50px;top:1015.00px;font-size:12px;line-height:12px;color:#444444;transform:scaleX(0.9423);">Nederlands (standaard)</div>
<svg style="position:absolute;left:359px;top:1014px;" width="13" height="13" viewBox="0 0 13 13"><circle cx="3" cy="3" r="2.5" fill="#555"/><rect x="0.5" y="3.5" width="12" height="9" fill="none" stroke="#555"/><path d="M6 2.5h6.5" stroke="#555" stroke-width="2"/><path d="M3 7h1M6 7h1M9 7h1M3 10h1M6 10h1M9 10h1" stroke="#555"/></svg>
<svg style="position:absolute;left:389px;top:1013px;" width="18" height="15" viewBox="0 0 18 15"><path d="M6 3a5 5 0 1 0 4 8" fill="none" stroke="#555" stroke-width="1.2" stroke-dasharray="2 1"/><path d="M6 0v7" stroke="#555" stroke-width="1.2"/><path d="M10 8l6 6M16 8l-6 6" stroke="#555" stroke-width="1.6"/></svg>
<div class="t" id="t687" style="left:409.40px;top:1015.00px;font-size:12px;line-height:12px;color:#444444;transform:scaleX(0.9842);">Toegankelijkheid: onderzoeken</div>
<svg style="position:absolute;left:1633px;top:1014px;" width="14" height="13" viewBox="0 0 14 13"><path d="M0.5 1.5c2-1 4-1 6 0v10c-2-1-4-1-6 0zM6.5 1.5c2-1 4-1 6 0v10c-2-1-4-1-6 0z" fill="none" stroke="#555"/><path d="M2 4h3M2 6h3M2 8h3M8 4h3M8 6h3M8 8h3" stroke="#555"/></svg>
<div style="left:1660px;top:1011px;width:40px;height:21px;background:#c6c6c6;"></div>
<svg style="position:absolute;left:1673px;top:1014px;" width="14" height="14" viewBox="0 0 14 14"><rect x="0.5" y="0.5" width="13" height="13" fill="none" stroke="#555"/><path d="M3 3.5h8M3 6h8M3 8.5h8M3 11h8" stroke="#555"/></svg>
<svg style="position:absolute;left:1713px;top:1014px;" width="15" height="14" viewBox="0 0 15 14"><rect x="0.5" y="0.5" width="10" height="11" fill="none" stroke="#555"/><path d="M2.5 3h6M2.5 5.5h6M2.5 8h3" stroke="#555"/><circle cx="11" cy="10.5" r="3.5" fill="#f3f3f3" stroke="#555"/><path d="M9 9l4 3" stroke="#555" stroke-width="1.4"/></svg>
<div style="left:1746px;top:1020px;width:8px;height:1px;background:#555;"></div>
<div style="left:1759px;top:1020px;width:100px;height:1px;background:#666;"></div>
<div style="left:1807px;top:1016px;width:5px;height:11px;background:#666;"></div>
<div style="left:1864px;top:1020px;width:8px;height:1px;background:#555;"></div>
<div style="left:1867.5px;top:1016px;width:1px;height:9px;background:#555;"></div>
<div class="t" id="t697" style="left:1885.60px;top:1015.00px;font-size:12px;line-height:12px;color:#444444;transform:scaleX(0.8403);">100%</div></div></body></html>
